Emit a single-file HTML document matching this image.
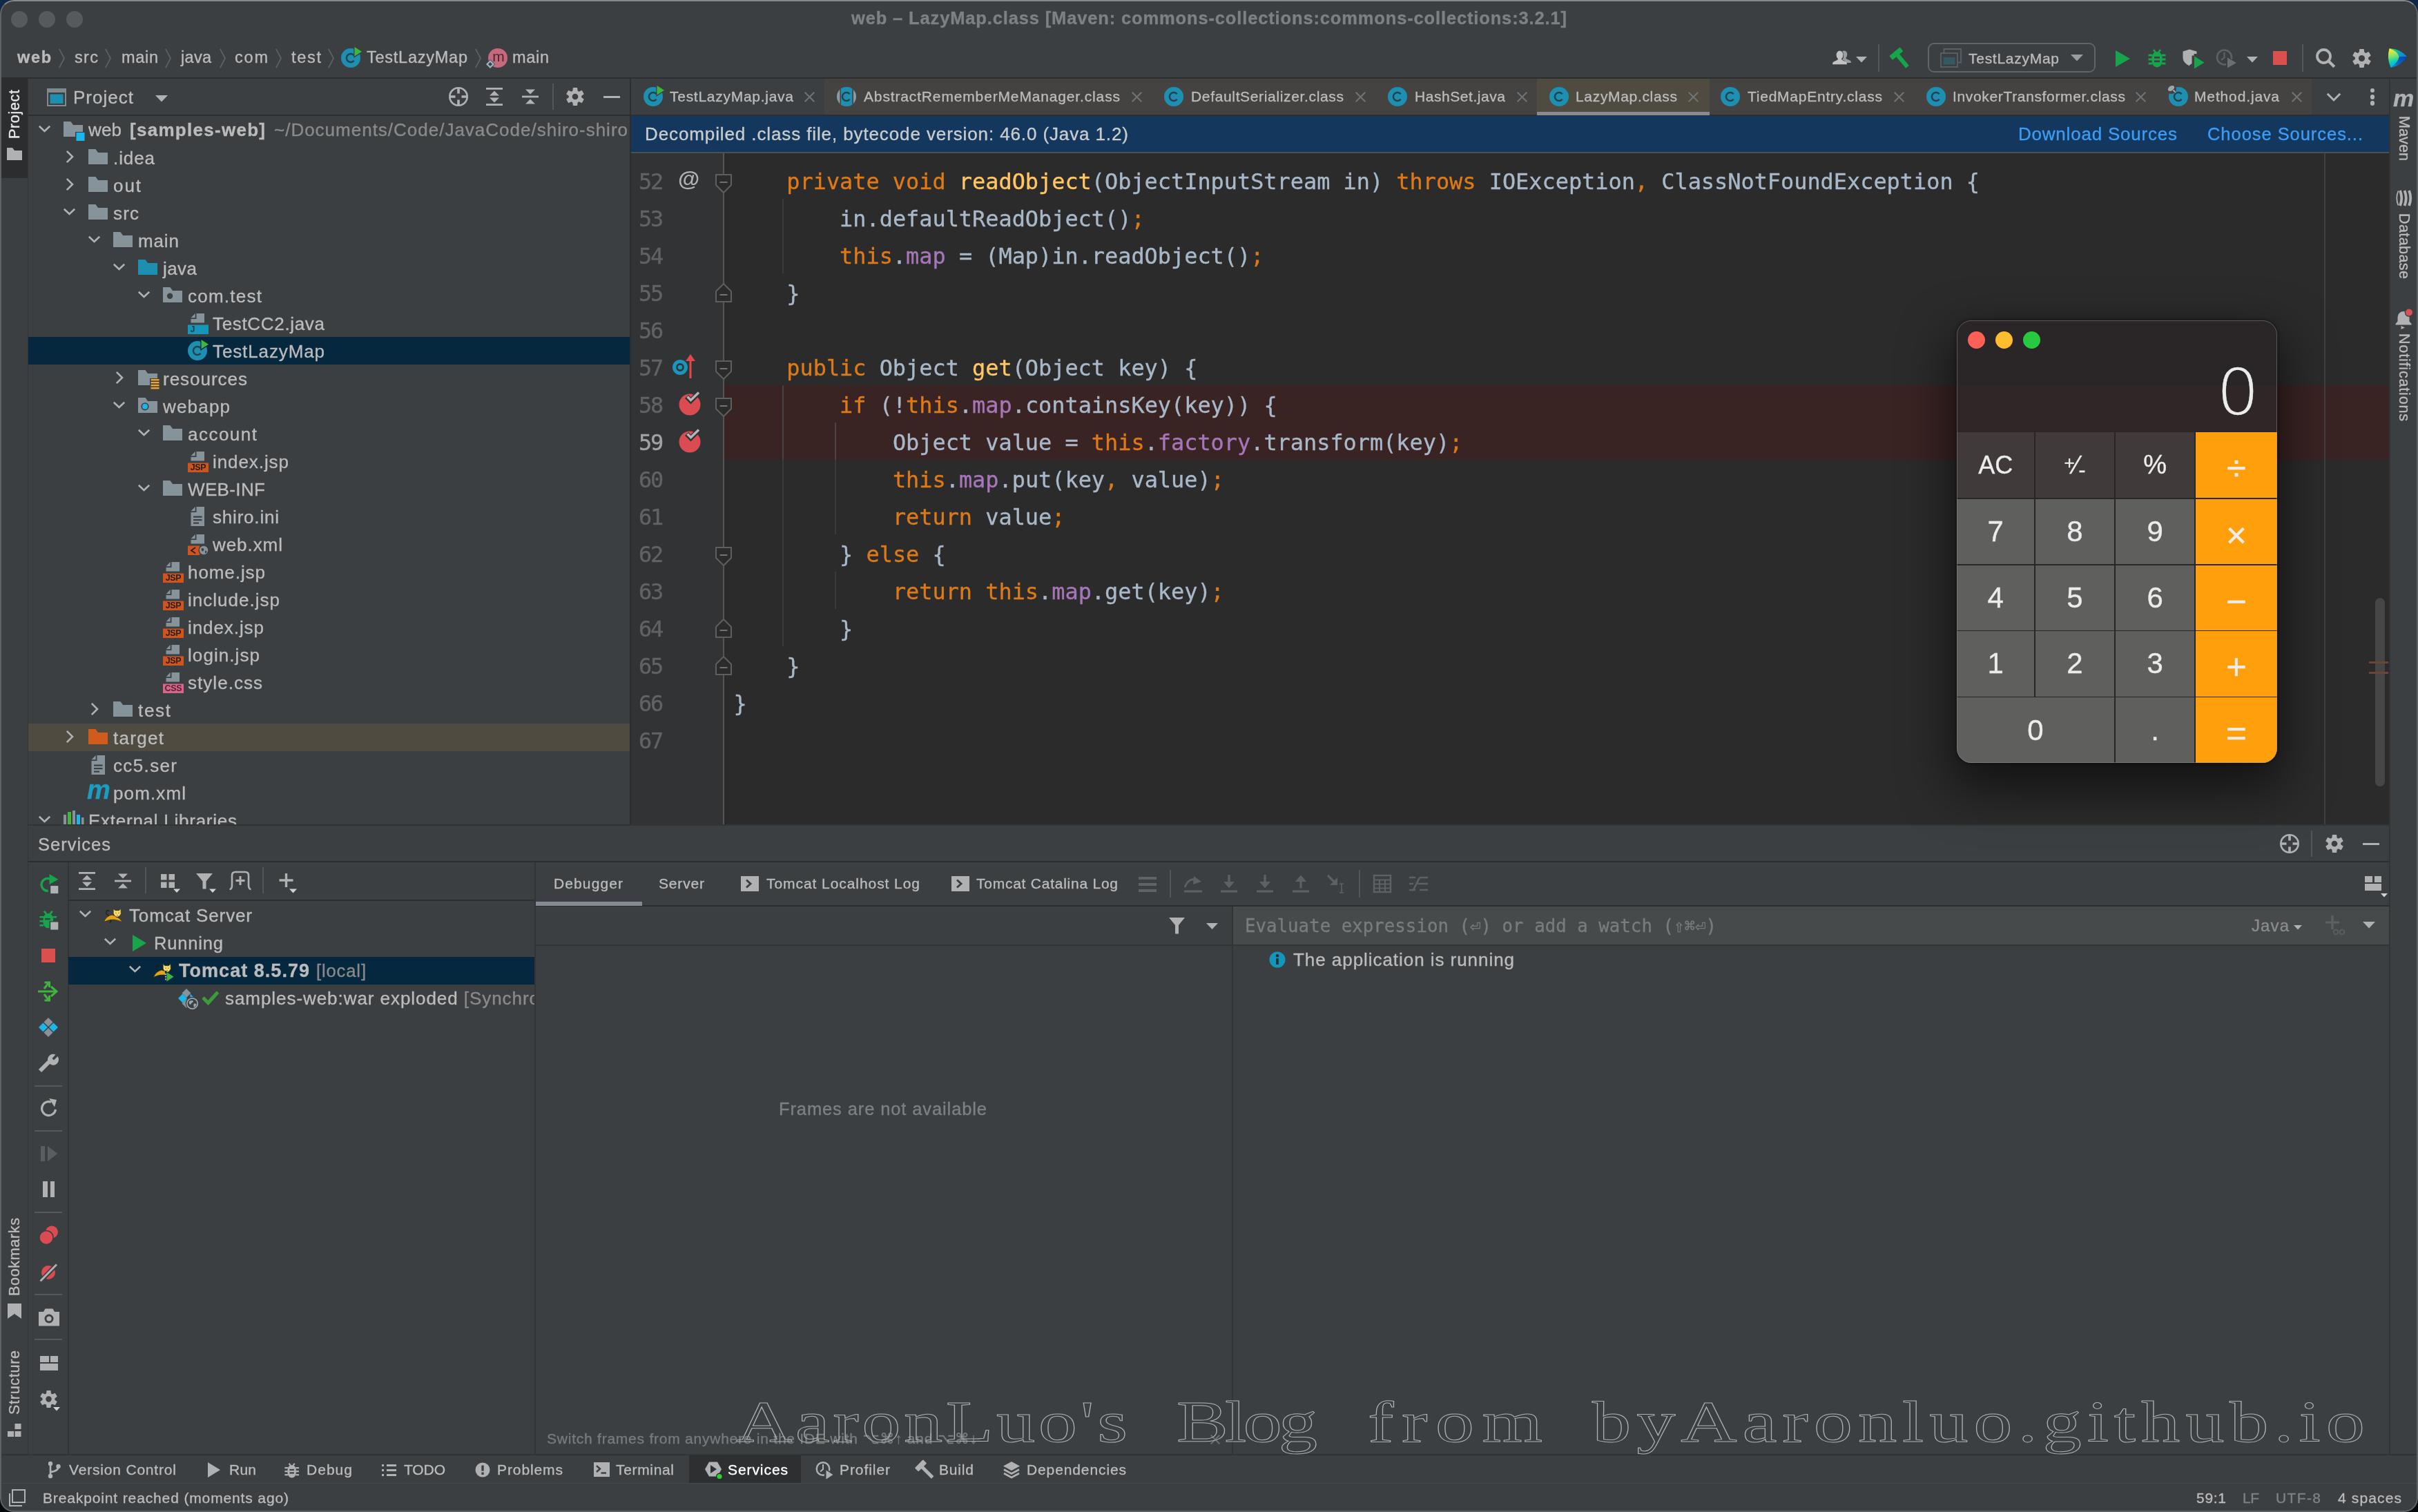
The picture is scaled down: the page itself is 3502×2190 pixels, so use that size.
<!DOCTYPE html>
<html lang="en"><head><meta charset="utf-8"><title>web – LazyMap.class</title><style>
html,body{margin:0;padding:0;background:#3c3f41;}
body{width:3502px;height:2190px;position:relative;overflow:hidden;font-family:"Liberation Sans",sans-serif;}
div,span,svg{position:absolute;}
span{white-space:pre;font-kerning:normal;-webkit-text-stroke:0.35px currentColor;}
svg{overflow:visible;}
</style></head><body>
<div id="root" style="left:0;top:0;width:3502px;height:2190px;will-change:transform">
<div style="left:16px;top:16px;width:24px;height:24px;background:#575a5c;border-radius:50%"></div>
<div style="left:56px;top:16px;width:24px;height:24px;background:#575a5c;border-radius:50%"></div>
<div style="left:96px;top:16px;width:24px;height:24px;background:#575a5c;border-radius:50%"></div>
<span id="title" style="left:1233px;top:9.0px;font-size:25.5px;line-height:34px;color:#7d8184;font-weight:700;letter-spacing:0.856px;">web – LazyMap.class [Maven: commons-collections:commons-collections:3.2.1]</span>
<span id="bc_web" style="left:25px;top:68.0px;font-size:23.5px;line-height:30px;color:#bbbbbb;font-weight:700;letter-spacing:1.641px;">web</span>
<span id="bc_src" style="left:108px;top:68.0px;font-size:23.5px;line-height:30px;color:#bbbbbb;letter-spacing:1.332px;">src</span>
<span id="bc_main" style="left:176px;top:68.0px;font-size:23.5px;line-height:30px;color:#bbbbbb;letter-spacing:0.688px;">main</span>
<span id="bc_java" style="left:262px;top:68.0px;font-size:23.5px;line-height:30px;color:#bbbbbb;letter-spacing:0.296px;">java</span>
<span id="bc_com" style="left:340px;top:68.0px;font-size:23.5px;line-height:30px;color:#bbbbbb;letter-spacing:1.797px;">com</span>
<span id="bc_test" style="left:422px;top:68.0px;font-size:23.5px;line-height:30px;color:#bbbbbb;letter-spacing:1.703px;">test</span>
<svg style="left:84.5px;top:70.0px;" width="9" height="29" viewBox="0 0 9 29"><path d="M0.8 0.8 L8 14.5 L0.8 28.2" fill="none" stroke="#5c6164" stroke-width="1.8"/></svg>
<svg style="left:151.5px;top:70.0px;" width="9" height="29" viewBox="0 0 9 29"><path d="M0.8 0.8 L8 14.5 L0.8 28.2" fill="none" stroke="#5c6164" stroke-width="1.8"/></svg>
<svg style="left:238.5px;top:70.0px;" width="9" height="29" viewBox="0 0 9 29"><path d="M0.8 0.8 L8 14.5 L0.8 28.2" fill="none" stroke="#5c6164" stroke-width="1.8"/></svg>
<svg style="left:317.5px;top:70.0px;" width="9" height="29" viewBox="0 0 9 29"><path d="M0.8 0.8 L8 14.5 L0.8 28.2" fill="none" stroke="#5c6164" stroke-width="1.8"/></svg>
<svg style="left:398.5px;top:70.0px;" width="9" height="29" viewBox="0 0 9 29"><path d="M0.8 0.8 L8 14.5 L0.8 28.2" fill="none" stroke="#5c6164" stroke-width="1.8"/></svg>
<svg style="left:474.5px;top:70.0px;" width="9" height="29" viewBox="0 0 9 29"><path d="M0.8 0.8 L8 14.5 L0.8 28.2" fill="none" stroke="#5c6164" stroke-width="1.8"/></svg>
<svg style="left:687.5px;top:70.0px;" width="9" height="29" viewBox="0 0 9 29"><path d="M0.8 0.8 L8 14.5 L0.8 28.2" fill="none" stroke="#5c6164" stroke-width="1.8"/></svg>
<svg style="left:492px;top:68px;" width="32" height="32" viewBox="0 0 32 32"><circle cx="16" cy="16" r="14" fill="#1d8fb1"/><path d="M20.6 12.3 A6 6 0 1 0 20.6 19.7" fill="none" stroke="#24414d" stroke-width="2.5"/><path d="M20.300 -2.300 L34.200 6.800 L20.300 15.900 Z" fill="#3c3f41"/><path d="M21.500 0 L32 6.800 L21.500 13.600 Z" fill="#3fb53f"/></svg>
<span id="bc_tlm" style="left:531px;top:68.0px;font-size:23.5px;line-height:30px;color:#bbbbbb;letter-spacing:0.754px;">TestLazyMap</span>
<svg style="left:704px;top:68px;" width="34" height="34" viewBox="0 0 34 34"><circle cx="17" cy="16" r="14" fill="#c5697c"/><path d="M6 18 L13 25 L6 32 L-1 25 Z" fill="#3c3f41"/><path d="M6 20.500 L10.500 25 L6 29.500 L1.500 25 Z" fill="none" stroke="#9db3c5" stroke-width="2.200"/></svg>
<span style="left:710px;top:70px;width:24px;text-align:center;font-size:21px;line-height:24px;color:#4b2530;font-weight:400;-webkit-text-stroke:0">m</span>
<span id="bc_main2" style="left:742px;top:68.0px;font-size:23.5px;line-height:30px;color:#bbbbbb;letter-spacing:0.688px;">main</span>
<svg style="left:2654px;top:71px;" width="28.5" height="24" viewBox="0 0 36 30"><path d="M21 3 a5.5 6.5 0 0 1 6 6.5 q0 4 -2.5 6 q0 2 2 3 l6 2.5 q1.5 1 1.5 4 H24 q0 -3 -2 -4 l-4 -2 q2.5 -2.5 2.5 -7 q0 -5 -2.5 -8 q1.2 -1 3 -1z" fill="#9a9da0"/><path d="M13 3 a6.5 7.5 0 0 1 6.5 7.5 q0 4.5 -3 7 q0 2 2 3 l6 2.8 q2 1 2 4.7 H0 q0 -3.700 2 -4.700 l6 -2.800 q2 -1 2 -3 q-3 -2.500 -3 -7 a6.500 7.500 0 0 1 6 -7.500z" fill="#c0c2c4"/></svg>
<svg style="left:2688.0px;top:81.75px;" width="16" height="8.5" viewBox="0 0 16 8.5"><path d="M0 0 H16 L8.0 8.5 Z" fill="#afb1b3"/></svg>
<div style="left:2720px;top:64px;width:2px;height:40px;background:#515658;"></div>
<svg style="left:2737px;top:68px;" width="36" height="32" viewBox="0 0 36 32"><g transform="rotate(-40 16 16)"><rect x="5" y="3" width="20" height="7.500" rx="1" fill="#17a54c"/><rect x="12" y="9" width="6" height="23" fill="#17a54c"/></g></svg>
<div style="left:2792px;top:62px;width:243px;height:43px;background:transparent;border:2px solid #5f6467;border-radius:9px;box-sizing:border-box"></div>
<svg style="left:2810px;top:70px;" width="32" height="28" viewBox="0 0 32 28"><path d="M5.500 6 V1 H30 V20.500 H25.500" fill="none" stroke="#5a6064" stroke-width="1.800"/><rect x="1" y="7" width="24" height="20" fill="#3c3f41" stroke="#5a6064" stroke-width="1.8"/><rect x="4.500" y="13" width="17" height="10.500" fill="#355865"/></svg>
<span id="rc_tlm" style="left:2851px;top:70.5px;font-size:21.0px;line-height:28px;color:#bbbbbb;letter-spacing:0.726px;">TestLazyMap</span>
<svg style="left:2999.0px;top:79.25px;" width="18" height="9.5" viewBox="0 0 18 9.5"><path d="M0 0 H18 L9.0 9.5 Z" fill="#9a9da0"/></svg>
<svg style="left:3064px;top:72.5px;" width="21" height="24" viewBox="0 0 21 24"><path d="M0 0 L21 12.0 L0 24 Z" fill="#17a54c"/></svg>
<svg style="left:3111.0px;top:70.0px;" width="26.0" height="28.0" viewBox="0 0 26.0 28.0"><g transform="scale(1.0)"><path d="M8 2 L11 6 M18 2 L15 6" stroke="#17a54c" stroke-width="2.6" fill="none"/><path d="M5.5 13 A7.5 8 0 0 1 20.5 13 V19 A7.5 8.5 0 0 1 5.5 19 Z" fill="#17a54c"/><path d="M0.5 10 H6 M0.5 16 H6 M0.5 22 H6 M20 10 H25.5 M20 16 H25.5 M20 22 H25.5" stroke="#17a54c" stroke-width="2.8"/><rect x="9" y="12" width="8" height="2.6" fill="#3c3f41"/><rect x="9" y="17.5" width="8" height="2.6" fill="#3c3f41"/></g></svg>
<svg style="left:3160px;top:71px;" width="34" height="30" viewBox="0 0 34 30"><path d="M11 0.500 L21.500 3.500 V7 H11 Z" fill="#afb1b3"/><path d="M11 0.500 L1.500 3.500 V13 q0 7 9.500 11.500 Z" fill="#afb1b3"/><path d="M11 6.500 h6.500 v3 h-3 v11.500 l-3.500 2.500z" fill="#afb1b3"/><path d="M18 10.500 L32.500 19.500 L18 28.500 Z" fill="#17a54c"/></svg>
<svg style="left:3208px;top:70px;" width="34" height="30" viewBox="0 0 34 30"><circle cx="13.500" cy="13" r="10.500" fill="none" stroke="#5e6164" stroke-width="2.600"/><path d="M13.500 6 V13.500 L9 17" fill="none" stroke="#5e6164" stroke-width="2.200"/><path d="M16 11 L31 20 L16 29 Z" fill="#3c3f41"/><path d="M18 13.500 L31 21 L18 28.500 Z" fill="#6b6e70"/></svg>
<svg style="left:3254.0px;top:81.75px;" width="16" height="8.5" viewBox="0 0 16 8.5"><path d="M0 0 H16 L8.0 8.5 Z" fill="#afb1b3"/></svg>
<div style="left:3292px;top:74px;width:20px;height:20px;background:#db4f4f;"></div>
<div style="left:3334px;top:64px;width:2px;height:40px;background:#515658;"></div>
<svg style="left:3353px;top:69px;" width="32" height="32" viewBox="0 0 32 32"><circle cx="12.500" cy="12.500" r="9.500" fill="none" stroke="#afb1b3" stroke-width="3.800"/><path d="M19 19 L27.800 27.800" stroke="#afb1b3" stroke-width="4.200"/></svg>
<svg style="left:3406.5px;top:70.5px;" width="27.0" height="27.0" viewBox="0 0 27.0 27.0"><g transform="translate(13.5,13.5)"><path d="M-3.17 -13.50 H3.17 L3.91 -7.43 H-3.91 Z" transform="rotate(0)" fill="#afb1b3"/><path d="M-3.17 -13.50 H3.17 L3.91 -7.43 H-3.91 Z" transform="rotate(60)" fill="#afb1b3"/><path d="M-3.17 -13.50 H3.17 L3.91 -7.43 H-3.91 Z" transform="rotate(120)" fill="#afb1b3"/><path d="M-3.17 -13.50 H3.17 L3.91 -7.43 H-3.91 Z" transform="rotate(180)" fill="#afb1b3"/><path d="M-3.17 -13.50 H3.17 L3.91 -7.43 H-3.91 Z" transform="rotate(240)" fill="#afb1b3"/><path d="M-3.17 -13.50 H3.17 L3.91 -7.43 H-3.91 Z" transform="rotate(300)" fill="#afb1b3"/><circle r="9.65" fill="#afb1b3"/><circle r="4.52" fill="#3c3f41"/></g></svg>
<svg style="left:3456px;top:68px;" width="32" height="32" viewBox="0 0 32 32"><defs><linearGradient id="lgA" x1="0" y1="0" x2="0.150" y2="1"><stop offset="0.050" stop-color="#fff21f"/><stop offset="0.450" stop-color="#86e070"/><stop offset="0.750" stop-color="#05d2b6"/><stop offset="1" stop-color="#0aaef0"/></linearGradient><linearGradient id="lgB" x1="0" y1="0" x2="1" y2="0.600"><stop offset="0" stop-color="#04e070"/><stop offset="0.550" stop-color="#07b3b3"/><stop offset="1" stop-color="#0a86e6"/></linearGradient><linearGradient id="lgC" x1="0.800" y1="0" x2="0.100" y2="1"><stop offset="0" stop-color="#0646ad"/><stop offset="0.600" stop-color="#0868c6"/><stop offset="1" stop-color="#0a9ae4"/></linearGradient></defs><path d="M4.600 2.100 Q20 2.500 30 14.200 L18.600 14.200 Q17 6 4.600 2.100 Z" fill="url(#lgB)"/><path d="M18.600 14.200 L30 14.200 Q22 27 6.600 29.900 Q17.500 22 18.600 14.200 Z" fill="url(#lgC)"/><path d="M4.600 2.100 Q17 6 18.600 14.200 Q17.500 22 6.600 29.900 Q0.300 16 4.600 2.100Z" fill="url(#lgA)"/></svg>
<div style="left:0px;top:112px;width:3502px;height:2px;background:#2b2d2e;"></div>
<div style="left:0px;top:114px;width:40px;height:1992px;background:#3c3f41;"></div>
<div style="left:40px;top:114px;width:1px;height:1992px;background:#323536;"></div>
<div style="left:0px;top:114px;width:40px;height:144px;background:#2b2d2f;"></div>
<span id="v_project" style="transform-origin:0 0;transform:rotate(-90deg);left:6.0px;top:201px;font-size:21.5px;line-height:30px;color:#e8e8e8;letter-spacing:0.679px;">Project</span>
<svg style="left:10px;top:214px;" width="22" height="18" viewBox="0 0 22 18"><path d="M0 0 H8 L11 4 H22 V18 H0 Z" fill="#afb1b3"/></svg>
<span id="v_bm" style="transform-origin:0 0;transform:rotate(-90deg);left:6.0px;top:1877px;font-size:21.5px;line-height:30px;color:#bbbbbb;letter-spacing:0.683px;">Bookmarks</span>
<svg style="left:11px;top:1888px;" width="20" height="22" viewBox="0 0 20 22"><path d="M0 0 H20 V22 L10 15 L0 22 Z" fill="#afb1b3"/></svg>
<span id="v_st" style="transform-origin:0 0;transform:rotate(-90deg);left:6.0px;top:2049px;font-size:21.5px;line-height:30px;color:#bbbbbb;letter-spacing:0.721px;">Structure</span>
<svg style="left:11px;top:2062px;" width="20" height="20" viewBox="0 0 20 20"><rect x="10.500" y="0" width="9" height="8" fill="#afb1b3"/><rect x="0" y="11" width="9" height="8" fill="#afb1b3"/><rect x="10.500" y="11" width="9" height="8" fill="#afb1b3"/></svg>
<div style="left:3460px;top:114px;width:2px;height:1992px;background:#323536;"></div>
<span style="left:3466px;top:124px;font-size:34px;line-height:36px;font-weight:700;font-style:italic;color:#afb1b3;letter-spacing:-1px">m</span>
<span id="v_maven" style="transform-origin:0 0;transform:rotate(90deg);left:3497.0px;top:168px;font-size:21.5px;line-height:30px;color:#bbbbbb;letter-spacing:0.115px;">Maven</span>
<svg style="left:3469px;top:275px;" width="26" height="24" viewBox="0 0 26 24"><g fill="none" stroke="#afb1b3" stroke-width="3.800"><path d="M4.500 1.500 q-4.500 10.500 0 21" stroke-width="1.800"/><path d="M7 1 q4.500 11 0 22"/><path d="M13.500 1 q4.500 11 0 22"/><path d="M20 1 q4.500 11 0 22"/></g></svg>
<span id="v_db" style="transform-origin:0 0;transform:rotate(90deg);left:3497.0px;top:309px;font-size:21.5px;line-height:30px;color:#bbbbbb;letter-spacing:0.422px;">Database</span>
<svg style="left:3468px;top:446px;" width="28" height="30" viewBox="0 0 28 30"><path d="M13 5 a8.500 8.500 0 0 1 8.500 8.500 v6 l3 3.500 v1.500 H1.500 v-1.500 l3 -3.500 v-6 a8.500 8.500 0 0 1 8.500 -8.500z" fill="#afb1b3"/><path d="M9.500 26 L15 28.500 L9.500 31 Z" fill="#afb1b3"/><circle cx="21" cy="6.500" r="6.300" fill="#3c3f41"/><circle cx="21" cy="6.500" r="5" fill="#db4f55"/></svg>
<span id="v_nt" style="transform-origin:0 0;transform:rotate(90deg);left:3497.0px;top:483px;font-size:21.5px;line-height:30px;color:#bbbbbb;letter-spacing:0.824px;">Notifications</span>
<svg style="left:68px;top:128px;" width="28" height="26" viewBox="0 0 28 26"><rect x="1" y="1" width="26" height="24" fill="#3c3f41" stroke="#7f8b91" stroke-width="2"/><rect x="1" y="1" width="26" height="5" fill="#7f8b91"/><rect x="4.500" y="8.500" width="19" height="13.500" fill="#1d8fb1"/></svg>
<span id="ph_project" style="left:106px;top:124.0px;font-size:26.0px;line-height:34px;color:#bbbbbb;letter-spacing:1.013px;">Project</span>
<svg style="left:225.0px;top:138.25px;" width="18" height="9.5" viewBox="0 0 18 9.5"><path d="M0 0 H18 L9.0 9.5 Z" fill="#afb1b3"/></svg>
<svg style="left:649px;top:125px;" width="30" height="30" viewBox="0 0 30 30"><g transform="translate(15,15)"><circle r="12.7" fill="none" stroke="#afb1b3" stroke-width="2.6"/><path d="M0 -13 V-4.5 M0 4.5 V13 M-13 0 H-4.5 M4.5 0 H13" stroke="#afb1b3" stroke-width="3.6"/></g></svg>
<svg style="left:704px;top:127px;" width="24" height="26" viewBox="0 0 24 26"><rect x="0" y="0" width="24" height="2.8" fill="#afb1b3"/><rect x="0" y="23.2" width="24" height="2.8" fill="#afb1b3"/><path d="M12 4.5 L19 11.5 H5 Z M12 21.5 L19 14.5 H5 Z" fill="#afb1b3"/></svg>
<svg style="left:756px;top:127px;" width="24" height="26" viewBox="0 0 24 26"><rect x="0" y="11.6" width="24" height="2.8" fill="#afb1b3"/><path d="M12 9.5 L19 2.5 H5 Z M12 16.5 L19 23.5 H5 Z" fill="#afb1b3"/></svg>
<div style="left:800px;top:121px;width:2px;height:38px;background:#515658;"></div>
<svg style="left:820px;top:127px;" width="26" height="26" viewBox="0 0 26 26"><g transform="translate(13,13)"><path d="M-3.05 -13.00 H3.05 L3.77 -7.15 H-3.77 Z" transform="rotate(0)" fill="#afb1b3"/><path d="M-3.05 -13.00 H3.05 L3.77 -7.15 H-3.77 Z" transform="rotate(60)" fill="#afb1b3"/><path d="M-3.05 -13.00 H3.05 L3.77 -7.15 H-3.77 Z" transform="rotate(120)" fill="#afb1b3"/><path d="M-3.05 -13.00 H3.05 L3.77 -7.15 H-3.77 Z" transform="rotate(180)" fill="#afb1b3"/><path d="M-3.05 -13.00 H3.05 L3.77 -7.15 H-3.77 Z" transform="rotate(240)" fill="#afb1b3"/><path d="M-3.05 -13.00 H3.05 L3.77 -7.15 H-3.77 Z" transform="rotate(300)" fill="#afb1b3"/><circle r="9.29" fill="#afb1b3"/><circle r="4.36" fill="#3c3f41"/></g></svg>
<div style="left:874.0px;top:138.5px;width:24px;height:3px;background:#afb1b3;"></div>
<div style="left:41px;top:166px;width:871px;height:2px;background:#2b2d2e;"></div>
<div style="left:41px;top:488px;width:871px;height:40px;background:#06283f;"></div>
<div style="left:41px;top:1048px;width:871px;height:40px;background:#4f4b41;"></div>
<svg style="left:56.0px;top:181.5px;" width="17" height="9" viewBox="0 0 17 9"><path d="M0.8 0.8 L8.5 8 L16.2 0.8" fill="none" stroke="#afb1b3" stroke-width="2.6"/></svg>
<svg style="left:92px;top:176px;" width="32" height="30" viewBox="0 0 32 30"><path d="M0 0 H10.5 L14 5 H28 V15 H17 V22 H0 Z" fill="#87939a"/><rect x="18.5" y="16" width="12" height="12" fill="#1ab6ec"/></svg>
<span id="tr0a" style="left:128px;top:171.0px;font-size:26px;line-height:34px;color:#bbbbbb;letter-spacing:0.152px;">web</span>
<span id="tr0b" style="left:188px;top:171.0px;font-size:26px;line-height:34px;color:#bbbbbb;font-weight:700;letter-spacing:1.282px;">[samples-web]</span>
<span id="tr0c" style="left:397px;top:171.0px;font-size:26px;line-height:34px;color:#8a8a8a;letter-spacing:0.995px;">~/Documents/Code/JavaCode/shiro-shiro</span>
<svg style="left:96.0px;top:217.5px;" width="10" height="18" viewBox="0 0 10 18"><path d="M0.8 0.8 L9 9.0 L0.8 17.2" fill="none" stroke="#afb1b3" stroke-width="2.6"/></svg>
<svg style="left:128px;top:216px;" width="32" height="30" viewBox="0 0 32 30"><path d="M0 0 H10.5 L14 5 H28 V22 H0 Z" fill="#87939a"/></svg>
<span id="tr1" style="left:164px;top:211.5px;font-size:26px;line-height:34px;color:#bbbbbb;letter-spacing:0.903px;">.idea</span>
<svg style="left:96.0px;top:257.5px;" width="10" height="18" viewBox="0 0 10 18"><path d="M0.8 0.8 L9 9.0 L0.8 17.2" fill="none" stroke="#afb1b3" stroke-width="2.6"/></svg>
<svg style="left:128px;top:256px;" width="32" height="30" viewBox="0 0 32 30"><path d="M0 0 H10.5 L14 5 H28 V22 H0 Z" fill="#87939a"/></svg>
<span id="tr2" style="left:164px;top:251.5px;font-size:26px;line-height:34px;color:#bbbbbb;letter-spacing:1.924px;">out</span>
<svg style="left:92.0px;top:301.5px;" width="17" height="9" viewBox="0 0 17 9"><path d="M0.8 0.8 L8.5 8 L16.2 0.8" fill="none" stroke="#afb1b3" stroke-width="2.6"/></svg>
<svg style="left:128px;top:296px;" width="32" height="30" viewBox="0 0 32 30"><path d="M0 0 H10.5 L14 5 H28 V22 H0 Z" fill="#87939a"/></svg>
<span id="tr3" style="left:164px;top:291.5px;font-size:26px;line-height:34px;color:#bbbbbb;letter-spacing:1.168px;">src</span>
<svg style="left:128.0px;top:341.5px;" width="17" height="9" viewBox="0 0 17 9"><path d="M0.8 0.8 L8.5 8 L16.2 0.8" fill="none" stroke="#afb1b3" stroke-width="2.6"/></svg>
<svg style="left:164px;top:336px;" width="32" height="30" viewBox="0 0 32 30"><path d="M0 0 H10.5 L14 5 H28 V22 H0 Z" fill="#87939a"/></svg>
<span id="tr4" style="left:200px;top:331.5px;font-size:26px;line-height:34px;color:#bbbbbb;letter-spacing:0.878px;">main</span>
<svg style="left:164.0px;top:381.5px;" width="17" height="9" viewBox="0 0 17 9"><path d="M0.8 0.8 L8.5 8 L16.2 0.8" fill="none" stroke="#afb1b3" stroke-width="2.6"/></svg>
<svg style="left:200px;top:376px;" width="32" height="30" viewBox="0 0 32 30"><path d="M0 0 H10.5 L14 5 H28 V22 H0 Z" fill="#1d8fb1"/></svg>
<span id="tr5" style="left:236px;top:371.5px;font-size:26px;line-height:34px;color:#bbbbbb;letter-spacing:0.431px;">java</span>
<svg style="left:200.0px;top:421.5px;" width="17" height="9" viewBox="0 0 17 9"><path d="M0.8 0.8 L8.5 8 L16.2 0.8" fill="none" stroke="#afb1b3" stroke-width="2.6"/></svg>
<svg style="left:236px;top:416px;" width="32" height="30" viewBox="0 0 32 30"><path d="M0 0 H10.5 L14 5 H28 V22 H0 Z" fill="#87939a"/><circle cx="10.100" cy="12.800" r="4.200" fill="#3c3f41"/></svg>
<span id="tr6" style="left:272px;top:411.5px;font-size:26px;line-height:34px;color:#bbbbbb;letter-spacing:1.250px;">com.test</span>
<svg style="left:272px;top:454px;" width="30" height="30" viewBox="0 0 30 30"><path d="M12.5 0 H24 V13.5 H4.5 V8 H12.5 Z" fill="#87939a"/><path d="M4.5 6.2 L10.7 0 V6.2 Z" fill="#87939a"/><rect x="0" y="16.5" width="30" height="13.5" fill="#1497b8"/></svg>
<span style="left:275.5px;top:470px;font-size:12.5px;line-height:14px;font-weight:700;color:#1f3a45;-webkit-text-stroke:0">J</span>
<span id="tr7" style="left:308px;top:451.5px;font-size:26px;line-height:34px;color:#bbbbbb;letter-spacing:0.671px;">TestCC2.java</span>
<svg style="left:270px;top:492px;" width="32" height="32" viewBox="0 0 32 32"><circle cx="16" cy="16" r="14" fill="#1d8fb1"/><path d="M20.6 12.3 A6 6 0 1 0 20.6 19.7" fill="none" stroke="#24414d" stroke-width="2.5"/><path d="M20.300 -2.300 L34.200 6.800 L20.300 15.900 Z" fill="#06283f"/><path d="M21.500 0 L32 6.800 L21.500 13.600 Z" fill="#3fb53f"/></svg>
<span id="tr8" style="left:308px;top:491.5px;font-size:26px;line-height:34px;color:#bbbbbb;letter-spacing:0.882px;">TestLazyMap</span>
<svg style="left:168.0px;top:537.5px;" width="10" height="18" viewBox="0 0 10 18"><path d="M0.8 0.8 L9 9.0 L0.8 17.2" fill="none" stroke="#afb1b3" stroke-width="2.6"/></svg>
<svg style="left:200px;top:536px;" width="32" height="30" viewBox="0 0 32 30"><path d="M0 0 H10.5 L14 5 H28 V12 H17 V22 H0 Z" fill="#87939a"/><rect x="18.5" y="13" width="12" height="2.4" fill="#f0a51f"/><rect x="18.5" y="17" width="12" height="2.4" fill="#f0a51f"/><rect x="18.5" y="21" width="12" height="2.4" fill="#f0a51f"/><rect x="18.5" y="25" width="12" height="2.4" fill="#f0a51f"/></svg>
<span id="tr9" style="left:236px;top:531.5px;font-size:26px;line-height:34px;color:#bbbbbb;letter-spacing:0.980px;">resources</span>
<svg style="left:164.0px;top:581.5px;" width="17" height="9" viewBox="0 0 17 9"><path d="M0.8 0.8 L8.5 8 L16.2 0.8" fill="none" stroke="#afb1b3" stroke-width="2.6"/></svg>
<svg style="left:200px;top:576px;" width="32" height="30" viewBox="0 0 32 30"><path d="M0 0 H10.5 L14 5 H28 V22 H0 Z" fill="#87939a"/><circle cx="10" cy="12.800" r="5.600" fill="#3c3f41"/><circle cx="10" cy="12.800" r="4" fill="#1ab6ec"/></svg>
<span id="tr10" style="left:236px;top:571.5px;font-size:26px;line-height:34px;color:#bbbbbb;letter-spacing:1.183px;">webapp</span>
<svg style="left:200.0px;top:621.5px;" width="17" height="9" viewBox="0 0 17 9"><path d="M0.8 0.8 L8.5 8 L16.2 0.8" fill="none" stroke="#afb1b3" stroke-width="2.6"/></svg>
<svg style="left:236px;top:616px;" width="32" height="30" viewBox="0 0 32 30"><path d="M0 0 H10.5 L14 5 H28 V22 H0 Z" fill="#87939a"/></svg>
<span id="tr11" style="left:272px;top:611.5px;font-size:26px;line-height:34px;color:#bbbbbb;letter-spacing:1.487px;">account</span>
<svg style="left:272px;top:654px;" width="30" height="30" viewBox="0 0 30 30"><path d="M12.5 0 H24 V13.5 H4.5 V8 H12.5 Z" fill="#87939a"/><path d="M4.5 6.2 L10.7 0 V6.2 Z" fill="#87939a"/><rect x="0" y="16.5" width="30" height="13.5" fill="#d0541b"/></svg>
<span style="left:272px;top:670px;width:30px;text-align:center;font-size:12.5px;line-height:14px;font-weight:700;color:#231f20;letter-spacing:-0.3px;-webkit-text-stroke:0">JSP</span>
<span id="tr12" style="left:308px;top:651.5px;font-size:26px;line-height:34px;color:#bbbbbb;letter-spacing:0.923px;">index.jsp</span>
<svg style="left:200.0px;top:701.5px;" width="17" height="9" viewBox="0 0 17 9"><path d="M0.8 0.8 L8.5 8 L16.2 0.8" fill="none" stroke="#afb1b3" stroke-width="2.6"/></svg>
<svg style="left:236px;top:696px;" width="32" height="30" viewBox="0 0 32 30"><path d="M0 0 H10.5 L14 5 H28 V22 H0 Z" fill="#87939a"/></svg>
<span id="tr13" style="left:272px;top:691.5px;font-size:26px;line-height:34px;color:#bbbbbb;letter-spacing:0.371px;">WEB-INF</span>
<svg style="left:272px;top:734px;" width="30" height="30" viewBox="0 0 30 30"><path d="M12.5 0 H24 V28 H4.5 V8 H12.5 Z" fill="#87939a"/><path d="M4.5 6.2 L10.7 0 V6.2 Z" fill="#87939a"/><rect x="8" y="13.5" width="12.5" height="2.2" fill="#3c3f41"/><rect x="8" y="18" width="12.5" height="2.2" fill="#3c3f41"/><rect x="8" y="22.5" width="8" height="2.2" fill="#3c3f41"/></svg>
<span id="tr14" style="left:308px;top:731.5px;font-size:26px;line-height:34px;color:#bbbbbb;letter-spacing:0.800px;">shiro.ini</span>
<svg style="left:272px;top:774px;" width="32" height="32" viewBox="0 0 32 32"><path d="M12.5 0 H24 V13.5 H4.5 V8 H12.5 Z" fill="#87939a"/><path d="M4.5 6.2 L10.7 0 V6.2 Z" fill="#87939a"/><rect x="0" y="16.5" width="17" height="13.5" fill="#d0541b"/><path d="M11 19 L5 23.2 L11 27.4" fill="none" stroke="#231f20" stroke-width="1.8"/><circle cx="23" cy="23" r="7.6" fill="#3c3f41"/><circle cx="23" cy="23" r="6.2" fill="#87939a"/><path d="M19.5 20.5 q3 -1.5 4 1 q-0.5 2.5 -2.5 3 q-1.5 -1.5 -1.5 -4z M25 24 q2 -1 2.5 1.5 q-1.2 2 -2.5 2z" fill="#3c3f41"/></svg>
<span id="tr15" style="left:308px;top:771.5px;font-size:26px;line-height:34px;color:#bbbbbb;letter-spacing:0.940px;">web.xml</span>
<svg style="left:236px;top:814px;" width="30" height="30" viewBox="0 0 30 30"><path d="M12.5 0 H24 V13.5 H4.5 V8 H12.5 Z" fill="#87939a"/><path d="M4.5 6.2 L10.7 0 V6.2 Z" fill="#87939a"/><rect x="0" y="16.5" width="30" height="13.5" fill="#d0541b"/></svg>
<span style="left:236px;top:830px;width:30px;text-align:center;font-size:12.5px;line-height:14px;font-weight:700;color:#231f20;letter-spacing:-0.3px;-webkit-text-stroke:0">JSP</span>
<span id="tr16" style="left:272px;top:811.5px;font-size:26px;line-height:34px;color:#bbbbbb;letter-spacing:0.927px;">home.jsp</span>
<svg style="left:236px;top:854px;" width="30" height="30" viewBox="0 0 30 30"><path d="M12.5 0 H24 V13.5 H4.5 V8 H12.5 Z" fill="#87939a"/><path d="M4.5 6.2 L10.7 0 V6.2 Z" fill="#87939a"/><rect x="0" y="16.5" width="30" height="13.5" fill="#d0541b"/></svg>
<span style="left:236px;top:870px;width:30px;text-align:center;font-size:12.5px;line-height:14px;font-weight:700;color:#231f20;letter-spacing:-0.3px;-webkit-text-stroke:0">JSP</span>
<span id="tr17" style="left:272px;top:851.5px;font-size:26px;line-height:34px;color:#bbbbbb;letter-spacing:1.014px;">include.jsp</span>
<svg style="left:236px;top:894px;" width="30" height="30" viewBox="0 0 30 30"><path d="M12.5 0 H24 V13.5 H4.5 V8 H12.5 Z" fill="#87939a"/><path d="M4.5 6.2 L10.7 0 V6.2 Z" fill="#87939a"/><rect x="0" y="16.5" width="30" height="13.5" fill="#d0541b"/></svg>
<span style="left:236px;top:910px;width:30px;text-align:center;font-size:12.5px;line-height:14px;font-weight:700;color:#231f20;letter-spacing:-0.3px;-webkit-text-stroke:0">JSP</span>
<span id="tr18" style="left:272px;top:891.5px;font-size:26px;line-height:34px;color:#bbbbbb;letter-spacing:0.923px;">index.jsp</span>
<svg style="left:236px;top:934px;" width="30" height="30" viewBox="0 0 30 30"><path d="M12.5 0 H24 V13.5 H4.5 V8 H12.5 Z" fill="#87939a"/><path d="M4.5 6.2 L10.7 0 V6.2 Z" fill="#87939a"/><rect x="0" y="16.5" width="30" height="13.5" fill="#d0541b"/></svg>
<span style="left:236px;top:950px;width:30px;text-align:center;font-size:12.5px;line-height:14px;font-weight:700;color:#231f20;letter-spacing:-0.3px;-webkit-text-stroke:0">JSP</span>
<span id="tr19" style="left:272px;top:931.5px;font-size:26px;line-height:34px;color:#bbbbbb;letter-spacing:1.075px;">login.jsp</span>
<svg style="left:236px;top:974px;" width="30" height="30" viewBox="0 0 30 30"><path d="M12.5 0 H24 V13.5 H4.5 V8 H12.5 Z" fill="#87939a"/><path d="M4.5 6.2 L10.7 0 V6.2 Z" fill="#87939a"/><rect x="0" y="16.5" width="30" height="13.5" fill="#d4678a"/></svg>
<span style="left:236px;top:990px;width:30px;text-align:center;font-size:12.5px;line-height:14px;font-weight:700;color:#5a1f33;letter-spacing:-0.3px;-webkit-text-stroke:0">CSS</span>
<span id="tr20" style="left:272px;top:971.5px;font-size:26px;line-height:34px;color:#bbbbbb;letter-spacing:1.039px;">style.css</span>
<svg style="left:132.0px;top:1017.5px;" width="10" height="18" viewBox="0 0 10 18"><path d="M0.8 0.8 L9 9.0 L0.8 17.2" fill="none" stroke="#afb1b3" stroke-width="2.6"/></svg>
<svg style="left:164px;top:1016px;" width="32" height="30" viewBox="0 0 32 30"><path d="M0 0 H10.5 L14 5 H28 V22 H0 Z" fill="#87939a"/></svg>
<span id="tr21" style="left:200px;top:1011.5px;font-size:26px;line-height:34px;color:#bbbbbb;letter-spacing:1.694px;">test</span>
<svg style="left:96.0px;top:1057.5px;" width="10" height="18" viewBox="0 0 10 18"><path d="M0.8 0.8 L9 9.0 L0.8 17.2" fill="none" stroke="#afb1b3" stroke-width="2.6"/></svg>
<svg style="left:128px;top:1056px;" width="32" height="30" viewBox="0 0 32 30"><path d="M0 0 H10.5 L14 5 H28 V22 H0 Z" fill="#cf5b1d"/></svg>
<span id="tr22" style="left:164px;top:1051.5px;font-size:26px;line-height:34px;color:#bbbbbb;letter-spacing:1.302px;">target</span>
<svg style="left:128px;top:1094px;" width="30" height="30" viewBox="0 0 30 30"><path d="M12.5 0 H24 V28 H4.5 V8 H12.5 Z" fill="#87939a"/><path d="M4.5 6.2 L10.7 0 V6.2 Z" fill="#87939a"/><rect x="8" y="13.5" width="12.5" height="2.2" fill="#3c3f41"/><rect x="8" y="18" width="12.5" height="2.2" fill="#3c3f41"/><rect x="8" y="22.5" width="8" height="2.2" fill="#3c3f41"/></svg>
<span id="tr23" style="left:164px;top:1091.5px;font-size:26px;line-height:34px;color:#bbbbbb;letter-spacing:1.364px;">cc5.ser</span>
<span style="left:126px;top:1124px;font-size:38px;line-height:40px;font-weight:700;font-style:italic;color:#1d9bc0;letter-spacing:-1px">m</span>
<span id="tr24" style="left:164px;top:1131.5px;font-size:26px;line-height:34px;color:#bbbbbb;letter-spacing:1.125px;">pom.xml</span>
<svg style="left:56.0px;top:1181.5px;" width="17" height="9" viewBox="0 0 17 9"><path d="M0.8 0.8 L8.5 8 L16.2 0.8" fill="none" stroke="#afb1b3" stroke-width="2.6"/></svg>
<svg style="left:92px;top:1174px;" width="30" height="28" viewBox="0 0 30 28"><rect x="0" y="6" width="4" height="22" fill="#87939a"/><rect x="6" y="2" width="5" height="26" fill="#45b53c"/><rect x="13" y="0" width="4" height="28" fill="#87939a"/><rect x="19" y="6" width="5" height="22" fill="#1ab6ec"/><rect x="26" y="10" width="3.500" height="18" fill="#87939a"/></svg>
<span id="tr25" style="left:128px;top:1171.5px;font-size:26px;line-height:34px;color:#bbbbbb;letter-spacing:0.746px;">External Libraries</span>
<div style="left:41px;top:1195px;width:871px;height:14px;background:#3c3f41;"></div>
<div style="left:912px;top:114px;width:2548px;height:52px;background:#3c3f41;"></div>
<div style="left:1194px;top:114px;width:2154px;height:52px;background:#454341;"></div>
<div style="left:2226px;top:114px;width:250px;height:52px;background:#4f4b41;"></div>
<div style="left:2226px;top:162px;width:250px;height:5px;background:#8a9199;"></div>
<div style="left:912px;top:166px;width:2548px;height:2px;background:#2b2d2e;"></div>
<div style="left:2226px;top:162px;width:250px;height:5px;background:#848b93;"></div>
<svg style="left:930px;top:124px;" width="32" height="32" viewBox="0 0 32 32"><circle cx="16" cy="16" r="14" fill="#1d8fb1"/><path d="M20.6 12.3 A6 6 0 1 0 20.6 19.7" fill="none" stroke="#24414d" stroke-width="2.5"/><path d="M20.300 -2.300 L34.200 6.800 L20.300 15.900 Z" fill="#3c3f41"/><path d="M21.500 0 L32 6.800 L21.500 13.600 Z" fill="#3fb53f"/></svg>
<span id="tab0" style="left:970px;top:126.0px;font-size:21px;line-height:28px;color:#bbbbbb;letter-spacing:0.728px;">TestLazyMap.java</span>
<svg style="left:1164.5px;top:132.5px;" width="15" height="15" viewBox="0 0 15 15"><path d="M0.7 0.7 L14.3 14.3 M14.3 0.7 L0.7 14.3" stroke="#6f7476" stroke-width="2" fill="none"/></svg>
<svg style="left:1210px;top:124px;" width="32" height="32" viewBox="0 0 32 32"><defs><clipPath id="abclip"><circle cx="16" cy="16" r="14"/></clipPath></defs><circle cx="16" cy="16" r="14" fill="#8a9ba6"/><rect x="6.400" y="0" width="19.600" height="32" fill="#454341" clip-path="url(#abclip)"/><rect x="8" y="0" width="16.300" height="32" fill="#1d8fb1" clip-path="url(#abclip)"/><path d="M20.600 12.300 A6 6 0 1 0 20.600 19.700" fill="none" stroke="#24414d" stroke-width="2.500"/></svg>
<span id="tab1" style="left:1251px;top:126.0px;font-size:21px;line-height:28px;color:#bbbbbb;letter-spacing:0.851px;">AbstractRememberMeManager.class</span>
<svg style="left:1638.5px;top:132.5px;" width="15" height="15" viewBox="0 0 15 15"><path d="M0.7 0.7 L14.3 14.3 M14.3 0.7 L0.7 14.3" stroke="#6f7476" stroke-width="2" fill="none"/></svg>
<svg style="left:1684px;top:124px;" width="32" height="32" viewBox="0 0 32 32"><circle cx="16" cy="16" r="14" fill="#1d8fb1"/><path d="M20.6 12.3 A6 6 0 1 0 20.6 19.7" fill="none" stroke="#24414d" stroke-width="2.5"/></svg>
<span id="tab2" style="left:1725px;top:126.0px;font-size:21px;line-height:28px;color:#bbbbbb;letter-spacing:0.655px;">DefaultSerializer.class</span>
<svg style="left:1962.5px;top:132.5px;" width="15" height="15" viewBox="0 0 15 15"><path d="M0.7 0.7 L14.3 14.3 M14.3 0.7 L0.7 14.3" stroke="#6f7476" stroke-width="2" fill="none"/></svg>
<svg style="left:2008px;top:124px;" width="32" height="32" viewBox="0 0 32 32"><circle cx="16" cy="16" r="14" fill="#1d8fb1"/><path d="M20.6 12.3 A6 6 0 1 0 20.6 19.7" fill="none" stroke="#24414d" stroke-width="2.5"/></svg>
<span id="tab3" style="left:2049px;top:126.0px;font-size:21px;line-height:28px;color:#bbbbbb;letter-spacing:0.553px;">HashSet.java</span>
<svg style="left:2196.5px;top:132.5px;" width="15" height="15" viewBox="0 0 15 15"><path d="M0.7 0.7 L14.3 14.3 M14.3 0.7 L0.7 14.3" stroke="#6f7476" stroke-width="2" fill="none"/></svg>
<svg style="left:2242px;top:124px;" width="32" height="32" viewBox="0 0 32 32"><circle cx="16" cy="16" r="14" fill="#1d8fb1"/><path d="M20.6 12.3 A6 6 0 1 0 20.6 19.7" fill="none" stroke="#24414d" stroke-width="2.5"/></svg>
<span id="tab4" style="left:2282px;top:126.0px;font-size:21px;line-height:28px;color:#bbbbbb;letter-spacing:0.675px;">LazyMap.class</span>
<svg style="left:2444.5px;top:132.5px;" width="15" height="15" viewBox="0 0 15 15"><path d="M0.7 0.7 L14.3 14.3 M14.3 0.7 L0.7 14.3" stroke="#6f7476" stroke-width="2" fill="none"/></svg>
<svg style="left:2490px;top:124px;" width="32" height="32" viewBox="0 0 32 32"><circle cx="16" cy="16" r="14" fill="#1d8fb1"/><path d="M20.6 12.3 A6 6 0 1 0 20.6 19.7" fill="none" stroke="#24414d" stroke-width="2.5"/></svg>
<span id="tab5" style="left:2531px;top:126.0px;font-size:21px;line-height:28px;color:#bbbbbb;letter-spacing:0.761px;">TiedMapEntry.class</span>
<svg style="left:2742.5px;top:132.5px;" width="15" height="15" viewBox="0 0 15 15"><path d="M0.7 0.7 L14.3 14.3 M14.3 0.7 L0.7 14.3" stroke="#6f7476" stroke-width="2" fill="none"/></svg>
<svg style="left:2788px;top:124px;" width="32" height="32" viewBox="0 0 32 32"><circle cx="16" cy="16" r="14" fill="#1d8fb1"/><path d="M20.6 12.3 A6 6 0 1 0 20.6 19.7" fill="none" stroke="#24414d" stroke-width="2.5"/></svg>
<span id="tab6" style="left:2828px;top:126.0px;font-size:21px;line-height:28px;color:#bbbbbb;letter-spacing:0.654px;">InvokerTransformer.class</span>
<svg style="left:3092.5px;top:132.5px;" width="15" height="15" viewBox="0 0 15 15"><path d="M0.7 0.7 L14.3 14.3 M14.3 0.7 L0.7 14.3" stroke="#6f7476" stroke-width="2" fill="none"/></svg>
<svg style="left:3139px;top:124px;" width="32" height="32" viewBox="0 0 32 32"><circle cx="16" cy="16" r="14" fill="#1d8fb1"/><path d="M20.6 12.3 A6 6 0 1 0 20.6 19.7" fill="none" stroke="#24414d" stroke-width="2.5"/><circle cx="6" cy="5" r="7" fill="#454341"/><ellipse cx="5.5" cy="4" rx="5.2" ry="3.4" transform="rotate(-35 5.5 4)" fill="#9aa7b0"/><path d="M8 7.5 L13 11 L9.5 6 Z" fill="#c9ced2"/></svg>
<span id="tab7" style="left:3178px;top:126.0px;font-size:21px;line-height:28px;color:#bbbbbb;letter-spacing:0.859px;">Method.java</span>
<svg style="left:3318.5px;top:132.5px;" width="15" height="15" viewBox="0 0 15 15"><path d="M0.7 0.7 L14.3 14.3 M14.3 0.7 L0.7 14.3" stroke="#6f7476" stroke-width="2" fill="none"/></svg>
<svg style="left:3370.0px;top:134.5px;" width="20" height="11" viewBox="0 0 20 11"><path d="M0.8 0.8 L10.0 10 L19.2 0.8" fill="none" stroke="#afb1b3" stroke-width="3"/></svg>
<div style="left:3432.6px;top:127.6px;width:6.8px;height:6.8px;background:#afb1b3;border-radius:50%"></div>
<div style="left:3432.6px;top:136.9px;width:6.8px;height:6.8px;background:#afb1b3;border-radius:50%"></div>
<div style="left:3432.6px;top:146.1px;width:6.8px;height:6.8px;background:#afb1b3;border-radius:50%"></div>
<div style="left:912px;top:168px;width:2548px;height:52px;background:#14385d;"></div>
<div style="left:912px;top:220px;width:2548px;height:2px;background:#4b5053;"></div>
<span id="banner" style="left:934px;top:177.0px;font-size:26.0px;line-height:34px;color:#c9ccce;letter-spacing:0.887px;">Decompiled .class file, bytecode version: 46.0 (Java 1.2)</span>
<span id="dl" style="left:2923px;top:177.0px;font-size:26.0px;line-height:34px;color:#3d9cf5;letter-spacing:0.784px;">Download Sources</span>
<span id="cs" style="left:3197px;top:177.0px;font-size:25.5px;line-height:34px;color:#3d9cf5;letter-spacing:0.951px;">Choose Sources...</span>
<div style="left:912px;top:222px;width:136px;height:972px;background:#313335;"></div>
<div style="left:1048px;top:222px;width:2412px;height:972px;background:#2b2b2b;"></div>
<div style="left:1049px;top:558px;width:2411px;height:108px;background:#3a2323;"></div>
<div style="left:1047px;top:222px;width:2px;height:972px;background:#555555;"></div>
<div style="left:3366px;top:222px;width:2px;height:972px;background:#3f3f3f;"></div>
<div style="left:1132.5px;top:288px;width:2px;height:108px;background:#3b3b3b;"></div>
<div style="left:1132.5px;top:558px;width:2px;height:378px;background:#474343;"></div>
<div style="left:1132.5px;top:666px;width:2px;height:270px;background:#3b3b3b;"></div>
<div style="left:1209px;top:612px;width:2px;height:54px;background:#4a4444;"></div>
<div style="left:1209px;top:666px;width:2px;height:108px;background:#3b3b3b;"></div>
<div style="left:1209px;top:828px;width:2px;height:54px;background:#3b3b3b;"></div>
<span style="left:925px;top:242px;font-size:31.9px;line-height:42px;color:#606366;font-family:'DejaVu Sans Mono','Liberation Mono',monospace;letter-spacing:-2.2px">52</span>
<span style="left:1139.3px;top:242px;font-size:31.9px;line-height:42px;font-family:'DejaVu Sans Mono','Liberation Mono',monospace;letter-spacing:-0.004px"><span style="position:static;color:#dd7a18">private void </span><span style="position:static;color:#ffc663">readObject</span><span style="position:static;color:#a9b8c8">(ObjectInputStream in) </span><span style="position:static;color:#dd7a18">throws </span><span style="position:static;color:#a9b8c8">IOException</span><span style="position:static;color:#dd7a18">, </span><span style="position:static;color:#a9b8c8">ClassNotFoundException {</span></span>
<span style="left:925px;top:296px;font-size:31.9px;line-height:42px;color:#606366;font-family:'DejaVu Sans Mono','Liberation Mono',monospace;letter-spacing:-2.2px">53</span>
<span style="left:1216.1px;top:296px;font-size:31.9px;line-height:42px;font-family:'DejaVu Sans Mono','Liberation Mono',monospace;letter-spacing:-0.004px"><span style="position:static;color:#a9b8c8">in.defaultReadObject()</span><span style="position:static;color:#dd7a18">;</span></span>
<span style="left:925px;top:350px;font-size:31.9px;line-height:42px;color:#606366;font-family:'DejaVu Sans Mono','Liberation Mono',monospace;letter-spacing:-2.2px">54</span>
<span style="left:1216.1px;top:350px;font-size:31.9px;line-height:42px;font-family:'DejaVu Sans Mono','Liberation Mono',monospace;letter-spacing:-0.004px"><span style="position:static;color:#dd7a18">this</span><span style="position:static;color:#a9b8c8">.</span><span style="position:static;color:#a676b8">map</span><span style="position:static;color:#a9b8c8"> = (Map)in.readObject()</span><span style="position:static;color:#dd7a18">;</span></span>
<span style="left:925px;top:404px;font-size:31.9px;line-height:42px;color:#606366;font-family:'DejaVu Sans Mono','Liberation Mono',monospace;letter-spacing:-2.2px">55</span>
<span style="left:1139.3px;top:404px;font-size:31.9px;line-height:42px;font-family:'DejaVu Sans Mono','Liberation Mono',monospace;letter-spacing:-0.004px"><span style="position:static;color:#a9b8c8">}</span></span>
<span style="left:925px;top:458px;font-size:31.9px;line-height:42px;color:#606366;font-family:'DejaVu Sans Mono','Liberation Mono',monospace;letter-spacing:-2.2px">56</span>
<span style="left:925px;top:512px;font-size:31.9px;line-height:42px;color:#606366;font-family:'DejaVu Sans Mono','Liberation Mono',monospace;letter-spacing:-2.2px">57</span>
<span style="left:1139.3px;top:512px;font-size:31.9px;line-height:42px;font-family:'DejaVu Sans Mono','Liberation Mono',monospace;letter-spacing:-0.004px"><span style="position:static;color:#dd7a18">public </span><span style="position:static;color:#a9b8c8">Object </span><span style="position:static;color:#ffc663">get</span><span style="position:static;color:#a9b8c8">(Object key) {</span></span>
<span style="left:925px;top:566px;font-size:31.9px;line-height:42px;color:#606366;font-family:'DejaVu Sans Mono','Liberation Mono',monospace;letter-spacing:-2.2px">58</span>
<span style="left:1216.1px;top:566px;font-size:31.9px;line-height:42px;font-family:'DejaVu Sans Mono','Liberation Mono',monospace;letter-spacing:-0.004px"><span style="position:static;color:#dd7a18">if </span><span style="position:static;color:#a9b8c8">(!</span><span style="position:static;color:#dd7a18">this</span><span style="position:static;color:#a9b8c8">.</span><span style="position:static;color:#a676b8">map</span><span style="position:static;color:#a9b8c8">.containsKey(key)) {</span></span>
<span style="left:925px;top:620px;font-size:31.9px;line-height:42px;color:#a4a3a3;font-family:'DejaVu Sans Mono','Liberation Mono',monospace;letter-spacing:-2.2px">59</span>
<span style="left:1292.9px;top:620px;font-size:31.9px;line-height:42px;font-family:'DejaVu Sans Mono','Liberation Mono',monospace;letter-spacing:-0.004px"><span style="position:static;color:#a9b8c8">Object value = </span><span style="position:static;color:#dd7a18">this</span><span style="position:static;color:#a9b8c8">.</span><span style="position:static;color:#a676b8">factory</span><span style="position:static;color:#a9b8c8">.transform(key)</span><span style="position:static;color:#dd7a18">;</span></span>
<span style="left:925px;top:674px;font-size:31.9px;line-height:42px;color:#606366;font-family:'DejaVu Sans Mono','Liberation Mono',monospace;letter-spacing:-2.2px">60</span>
<span style="left:1292.9px;top:674px;font-size:31.9px;line-height:42px;font-family:'DejaVu Sans Mono','Liberation Mono',monospace;letter-spacing:-0.004px"><span style="position:static;color:#dd7a18">this</span><span style="position:static;color:#a9b8c8">.</span><span style="position:static;color:#a676b8">map</span><span style="position:static;color:#a9b8c8">.put(key</span><span style="position:static;color:#dd7a18">, </span><span style="position:static;color:#a9b8c8">value)</span><span style="position:static;color:#dd7a18">;</span></span>
<span style="left:925px;top:728px;font-size:31.9px;line-height:42px;color:#606366;font-family:'DejaVu Sans Mono','Liberation Mono',monospace;letter-spacing:-2.2px">61</span>
<span style="left:1292.9px;top:728px;font-size:31.9px;line-height:42px;font-family:'DejaVu Sans Mono','Liberation Mono',monospace;letter-spacing:-0.004px"><span style="position:static;color:#dd7a18">return </span><span style="position:static;color:#a9b8c8">value</span><span style="position:static;color:#dd7a18">;</span></span>
<span style="left:925px;top:782px;font-size:31.9px;line-height:42px;color:#606366;font-family:'DejaVu Sans Mono','Liberation Mono',monospace;letter-spacing:-2.2px">62</span>
<span style="left:1216.1px;top:782px;font-size:31.9px;line-height:42px;font-family:'DejaVu Sans Mono','Liberation Mono',monospace;letter-spacing:-0.004px"><span style="position:static;color:#a9b8c8">} </span><span style="position:static;color:#dd7a18">else </span><span style="position:static;color:#a9b8c8">{</span></span>
<span style="left:925px;top:836px;font-size:31.9px;line-height:42px;color:#606366;font-family:'DejaVu Sans Mono','Liberation Mono',monospace;letter-spacing:-2.2px">63</span>
<span style="left:1292.9px;top:836px;font-size:31.9px;line-height:42px;font-family:'DejaVu Sans Mono','Liberation Mono',monospace;letter-spacing:-0.004px"><span style="position:static;color:#dd7a18">return this</span><span style="position:static;color:#a9b8c8">.</span><span style="position:static;color:#a676b8">map</span><span style="position:static;color:#a9b8c8">.get(key)</span><span style="position:static;color:#dd7a18">;</span></span>
<span style="left:925px;top:890px;font-size:31.9px;line-height:42px;color:#606366;font-family:'DejaVu Sans Mono','Liberation Mono',monospace;letter-spacing:-2.2px">64</span>
<span style="left:1216.1px;top:890px;font-size:31.9px;line-height:42px;font-family:'DejaVu Sans Mono','Liberation Mono',monospace;letter-spacing:-0.004px"><span style="position:static;color:#a9b8c8">}</span></span>
<span style="left:925px;top:944px;font-size:31.9px;line-height:42px;color:#606366;font-family:'DejaVu Sans Mono','Liberation Mono',monospace;letter-spacing:-2.2px">65</span>
<span style="left:1139.3px;top:944px;font-size:31.9px;line-height:42px;font-family:'DejaVu Sans Mono','Liberation Mono',monospace;letter-spacing:-0.004px"><span style="position:static;color:#a9b8c8">}</span></span>
<span style="left:925px;top:998px;font-size:31.9px;line-height:42px;color:#606366;font-family:'DejaVu Sans Mono','Liberation Mono',monospace;letter-spacing:-2.2px">66</span>
<span style="left:1062.5px;top:998px;font-size:31.9px;line-height:42px;font-family:'DejaVu Sans Mono','Liberation Mono',monospace;letter-spacing:-0.004px"><span style="position:static;color:#a9b8c8">}</span></span>
<span style="left:925px;top:1052px;font-size:31.9px;line-height:42px;color:#606366;font-family:'DejaVu Sans Mono','Liberation Mono',monospace;letter-spacing:-2.2px">67</span>
<span style="left:982px;top:239px;font-size:32px;line-height:40px;color:#afb1b3;font-weight:700;-webkit-text-stroke:0">@</span>
<svg style="left:1036px;top:252px;" width="24" height="28" viewBox="0 0 24 28"><path d="M1 1 H23 V16 L12 27 L1 16 Z" fill="#2b2b2b" stroke="#5e5e5e" stroke-width="2"/><path d="M6.500 12 H17.500" stroke="#7a7a7a" stroke-width="1.800"/></svg>
<svg style="left:1036px;top:522px;" width="24" height="28" viewBox="0 0 24 28"><path d="M1 1 H23 V16 L12 27 L1 16 Z" fill="#2b2b2b" stroke="#5e5e5e" stroke-width="2"/><path d="M6.500 12 H17.500" stroke="#7a7a7a" stroke-width="1.800"/></svg>
<svg style="left:1036px;top:576px;" width="24" height="28" viewBox="0 0 24 28"><path d="M1 1 H23 V16 L12 27 L1 16 Z" fill="#2b2b2b" stroke="#5e5e5e" stroke-width="2"/><path d="M6.500 12 H17.500" stroke="#7a7a7a" stroke-width="1.800"/></svg>
<svg style="left:1036px;top:792px;" width="24" height="28" viewBox="0 0 24 28"><path d="M1 1 H23 V16 L12 27 L1 16 Z" fill="#2b2b2b" stroke="#5e5e5e" stroke-width="2"/><path d="M6.500 12 H17.500" stroke="#7a7a7a" stroke-width="1.800"/></svg>
<svg style="left:1036px;top:409.5px;" width="24" height="28" viewBox="0 0 24 28"><path d="M1 27 H23 V12 L12 1 L1 12 Z" fill="#2b2b2b" stroke="#5e5e5e" stroke-width="2"/><path d="M6.500 17 H17.500" stroke="#7a7a7a" stroke-width="1.800"/></svg>
<svg style="left:1036px;top:895.5px;" width="24" height="28" viewBox="0 0 24 28"><path d="M1 27 H23 V12 L12 1 L1 12 Z" fill="#2b2b2b" stroke="#5e5e5e" stroke-width="2"/><path d="M6.500 17 H17.500" stroke="#7a7a7a" stroke-width="1.800"/></svg>
<svg style="left:1036px;top:949.5px;" width="24" height="28" viewBox="0 0 24 28"><path d="M1 27 H23 V12 L12 1 L1 12 Z" fill="#2b2b2b" stroke="#5e5e5e" stroke-width="2"/><path d="M6.500 17 H17.500" stroke="#7a7a7a" stroke-width="1.800"/></svg>
<svg style="left:973px;top:508.5px;" width="40" height="40" viewBox="0 0 40 40"><circle cx="12" cy="23" r="11" fill="#1896be"/><circle cx="12" cy="23" r="4.600" fill="none" stroke="#313335" stroke-width="2.600"/><path d="M27 39 V10" stroke="#e0484f" stroke-width="3"/><path d="M27 4 L34 14 H20 Z" fill="#e0484f"/></svg>
<svg style="left:982px;top:564.5px;" width="36" height="38" viewBox="0 0 36 38"><circle cx="17" cy="21" r="15.500" fill="#db4b52"/><path d="M12.500 9.500 L18.500 15.500 L30.500 3.500" fill="none" stroke="#313335" stroke-width="7"/><path d="M13.500 9.500 L18.500 14.500 L30 3.500" fill="none" stroke="#b4b6b8" stroke-width="3.400"/></svg>
<svg style="left:982px;top:618.5px;" width="36" height="38" viewBox="0 0 36 38"><circle cx="17" cy="21" r="15.500" fill="#db4b52"/><path d="M12.500 9.500 L18.500 15.500 L30.500 3.500" fill="none" stroke="#313335" stroke-width="7"/><path d="M13.500 9.500 L18.500 14.500 L30 3.500" fill="none" stroke="#b4b6b8" stroke-width="3.400"/></svg>
<div style="left:912px;top:114px;width:2px;height:1080px;background:#2b2d2e;"></div>
<div style="left:3440px;top:866px;width:14px;height:273px;background:rgba(120,120,120,0.35);border-radius:7px"></div>
<div style="left:3431px;top:958px;width:28px;height:3px;background:#6e4436;"></div>
<div style="left:3431px;top:973px;width:28px;height:3px;background:#6e4436;"></div>
<div style="left:41px;top:1194px;width:3419px;height:912px;background:#3c3f41;"></div>
<div style="left:41px;top:1194px;width:3419px;height:2px;background:#323536;"></div>
<span id="svc" style="left:55px;top:1206.0px;font-size:25.5px;line-height:34px;color:#bbbbbb;letter-spacing:1.031px;">Services</span>
<svg style="left:3301px;top:1207px;" width="30" height="30" viewBox="0 0 30 30"><g transform="translate(15,15)"><circle r="12.7" fill="none" stroke="#afb1b3" stroke-width="2.6"/><path d="M0 -13 V-4.5 M0 4.5 V13 M-13 0 H-4.5 M4.5 0 H13" stroke="#afb1b3" stroke-width="3.6"/></g></svg>
<div style="left:3347px;top:1203px;width:2px;height:38px;background:#515658;"></div>
<svg style="left:3368px;top:1209px;" width="26" height="26" viewBox="0 0 26 26"><g transform="translate(13,13)"><path d="M-3.05 -13.00 H3.05 L3.77 -7.15 H-3.77 Z" transform="rotate(0)" fill="#afb1b3"/><path d="M-3.05 -13.00 H3.05 L3.77 -7.15 H-3.77 Z" transform="rotate(60)" fill="#afb1b3"/><path d="M-3.05 -13.00 H3.05 L3.77 -7.15 H-3.77 Z" transform="rotate(120)" fill="#afb1b3"/><path d="M-3.05 -13.00 H3.05 L3.77 -7.15 H-3.77 Z" transform="rotate(180)" fill="#afb1b3"/><path d="M-3.05 -13.00 H3.05 L3.77 -7.15 H-3.77 Z" transform="rotate(240)" fill="#afb1b3"/><path d="M-3.05 -13.00 H3.05 L3.77 -7.15 H-3.77 Z" transform="rotate(300)" fill="#afb1b3"/><circle r="9.29" fill="#afb1b3"/><circle r="4.36" fill="#3c3f41"/></g></svg>
<div style="left:3422.0px;top:1220.5px;width:24px;height:3px;background:#afb1b3;"></div>
<div style="left:41px;top:1247px;width:3419px;height:2px;background:#2b2d2e;"></div>
<div style="left:98px;top:1249px;width:2px;height:857px;background:#323536;"></div>
<svg style="left:57px;top:1266px;" width="29" height="29" viewBox="0 0 34 34"><path d="M15 28.500 A10.500 10.500 0 1 1 18 8.300" fill="none" stroke="#17a54c" stroke-width="4"/><path d="M17 0 L32 9 L17 17.500 Z" fill="#17a54c"/><rect x="19" y="20" width="13" height="13" fill="#afb1b3"/></svg>
<svg style="left:57px;top:1318px;" width="29" height="29" viewBox="0 0 34 34"><path d="M8 2 L12 7 M22 2 L18 7" stroke="#17a54c" stroke-width="3.200" fill="none"/><path d="M6.500 15 A8.500 9 0 0 1 23.500 15 V19 H17 V30.500 A8.500 9 0 0 1 6.500 22 Z" fill="#17a54c"/><path d="M0.500 12 H7 M0.500 19 H7 M0.500 26 H7 M23 12 H29.500" stroke="#17a54c" stroke-width="3"/><rect x="9.500" y="14" width="9" height="2.800" fill="#3c3f41"/><rect x="19" y="20.500" width="13" height="13" fill="#afb1b3"/></svg>
<div style="left:60px;top:1374px;width:20px;height:20px;background:#db4f4f;"></div>
<svg style="left:55px;top:1420px;" width="32" height="32" viewBox="0 0 32 32"><g fill="none" stroke="#3fb53f" stroke-width="3"><path d="M0 16 H26"/><path d="M19 9 L27 16 L19 23"/><path d="M9 12 L16 3 M9.500 3 H16.500 V10"/><path d="M9 20 L16 29 M9.500 29 H16.500 V22"/></g></svg>
<svg style="left:55px;top:1473px;" width="30" height="30" viewBox="0 0 30 30"><path d="M15 1 L21.500 7.500 L15 14 L8.500 7.500 Z" fill="#87939a"/><path d="M15 16 L21.500 22.500 L15 29 L8.500 22.500 Z" fill="#87939a"/><path d="M7.500 8.500 L14 15 L7.500 21.500 L1 15 Z" fill="#1ab6ec"/><path d="M22.500 8.500 L29 15 L22.500 21.500 L16 15 Z" fill="#1ab6ec"/></svg>
<svg style="left:56px;top:1526px;" width="30" height="30" viewBox="0 0 30 30"><path d="M2 25 L15 12" stroke="#afb1b3" stroke-width="6" /><path d="M27.500 4 L22 9.500 L19.500 7 L24.500 1.500 A8 8 0 1 0 27.500 4 Z" fill="#afb1b3"/></svg>
<div style="left:50px;top:1572px;width:40px;height:2px;background:#55595b;"></div>
<div style="left:50px;top:1637px;width:40px;height:2px;background:#55595b;"></div>
<div style="left:50px;top:1755px;width:40px;height:2px;background:#55595b;"></div>
<div style="left:50px;top:1874px;width:40px;height:2px;background:#55595b;"></div>
<div style="left:50px;top:1939px;width:40px;height:2px;background:#55595b;"></div>
<svg style="left:57px;top:1591px;" width="28" height="28" viewBox="0 0 28 28"><path d="M23.500 16 A10 10 0 1 1 17 5.200" fill="none" stroke="#afb1b3" stroke-width="3.200"/><path d="M14 0 L25 2 L22 12.500 Z" fill="#afb1b3"/></svg>
<svg style="left:59px;top:1659px;" width="26" height="24" viewBox="0 0 26 24"><rect x="0" y="1" width="6" height="22" fill="#5a5d5f"/><path d="M10 1 L24.500 12 L10 23 Z" fill="#5a5d5f"/></svg>
<div style="left:62px;top:1711px;width:6.5px;height:23px;background:#afb1b3;"></div>
<div style="left:72.5px;top:1711px;width:6.5px;height:23px;background:#afb1b3;"></div>
<svg style="left:57px;top:1775px;" width="28" height="28" viewBox="0 0 28 28"><circle cx="18" cy="9.500" r="9" fill="#db4b52"/><circle cx="10" cy="17.500" r="10.800" fill="#3c3f41"/><circle cx="10" cy="17.500" r="9.300" fill="#db4b52"/></svg>
<svg style="left:57px;top:1829px;" width="28" height="28" viewBox="0 0 28 28"><circle cx="13" cy="14" r="10" fill="#db4b52"/><path d="M2 26.500 L25 2.500" stroke="#3c3f41" stroke-width="6.500"/><path d="M1.500 26.500 L25 2.500" stroke="#afb1b3" stroke-width="2.800"/></svg>
<svg style="left:56px;top:1895px;" width="30" height="26" viewBox="0 0 30 26"><path d="M0 5 H7 L9.500 0.500 H20.500 L23 5 H30 V25.500 H0 Z" fill="#afb1b3"/><circle cx="15" cy="15" r="6.500" fill="#3c3f41"/><circle cx="15" cy="15" r="3.600" fill="#afb1b3"/></svg>
<div style="left:57.5px;top:1964px;width:13px;height:8.5px;background:#afb1b3;"></div>
<div style="left:73px;top:1964px;width:10.5px;height:8.5px;background:#afb1b3;"></div>
<div style="left:57.5px;top:1975px;width:26px;height:9.5px;background:#afb1b3;"></div>
<svg style="left:57.5px;top:2013.5px;" width="25.0" height="25.0" viewBox="0 0 25.0 25.0"><g transform="translate(12.5,12.5)"><path d="M-2.94 -12.50 H2.94 L3.62 -6.88 H-3.62 Z" transform="rotate(0)" fill="#afb1b3"/><path d="M-2.94 -12.50 H2.94 L3.62 -6.88 H-3.62 Z" transform="rotate(60)" fill="#afb1b3"/><path d="M-2.94 -12.50 H2.94 L3.62 -6.88 H-3.62 Z" transform="rotate(120)" fill="#afb1b3"/><path d="M-2.94 -12.50 H2.94 L3.62 -6.88 H-3.62 Z" transform="rotate(180)" fill="#afb1b3"/><path d="M-2.94 -12.50 H2.94 L3.62 -6.88 H-3.62 Z" transform="rotate(240)" fill="#afb1b3"/><path d="M-2.94 -12.50 H2.94 L3.62 -6.88 H-3.62 Z" transform="rotate(300)" fill="#afb1b3"/><circle r="8.94" fill="#afb1b3"/><circle r="4.19" fill="#3c3f41"/></g></svg>
<svg style="left:77.0px;top:2038.25px;" width="10" height="5.5" viewBox="0 0 10 5.5"><path d="M0 0 H10 L5.0 5.5 Z" fill="#d0d2d4"/></svg>
<svg style="left:114px;top:1263px;" width="24" height="26" viewBox="0 0 24 26"><rect x="0" y="0" width="24" height="2.8" fill="#afb1b3"/><rect x="0" y="23.2" width="24" height="2.8" fill="#afb1b3"/><path d="M12 4.5 L19 11.5 H5 Z M12 21.5 L19 14.5 H5 Z" fill="#afb1b3"/></svg>
<svg style="left:166px;top:1263px;" width="24" height="26" viewBox="0 0 24 26"><rect x="0" y="11.6" width="24" height="2.8" fill="#afb1b3"/><path d="M12 9.5 L19 2.5 H5 Z M12 16.5 L19 23.5 H5 Z" fill="#afb1b3"/></svg>
<div style="left:210px;top:1256px;width:2px;height:38px;background:#515658;"></div>
<svg style="left:233px;top:1265px;" width="30" height="30" viewBox="0 0 30 30"><rect x="0" y="1" width="8.500" height="8.500" fill="#afb1b3"/><rect x="11.500" y="1" width="8.500" height="8.500" fill="#afb1b3"/><rect x="0" y="12.500" width="8.500" height="8.500" fill="#afb1b3"/><rect x="11.500" y="12.500" width="8.500" height="8.500" fill="#afb1b3"/><path d="M18 22.500 H28 L23 28 Z" fill="#d0d2d4"/></svg>
<svg style="left:283px;top:1264px;" width="32" height="30" viewBox="0 0 32 30"><path d="M1 1 H25 L15.500 12.500 V23.500 H10.500 V12.500 Z" fill="#afb1b3"/><path d="M20 23.500 H30 L25 29 Z" fill="#d0d2d4"/></svg>
<svg style="left:331px;top:1261px;" width="34" height="28" viewBox="0 0 34 28"><path d="M1.500 27 Q5 27 5 21 V7 Q5 2 10 2 H24 Q29 2 29 7 V21 Q29 27 32.500 27" fill="none" stroke="#afb1b3" stroke-width="2.600"/><path d="M17 8 V21 M10.500 14.500 H23.500" stroke="#afb1b3" stroke-width="3"/></svg>
<div style="left:380px;top:1256px;width:2px;height:38px;background:#515658;"></div>
<svg style="left:404px;top:1264px;" width="30" height="32" viewBox="0 0 30 32"><path d="M10.500 1 V21 M0.500 11 H20.500" stroke="#afb1b3" stroke-width="3.400"/><path d="M15 23.500 H26 L20.500 29.500 Z" fill="#d0d2d4"/></svg>
<div style="left:99px;top:1303px;width:675px;height:2px;background:#2b2d2e;"></div>
<div style="left:99px;top:1386px;width:675px;height:40px;background:#06283f;"></div>
<svg style="left:115.0px;top:1319.0px;" width="17" height="9" viewBox="0 0 17 9"><path d="M0.8 0.8 L8.5 8 L16.2 0.8" fill="none" stroke="#afb1b3" stroke-width="2.6"/></svg>
<svg style="left:150px;top:1312px;" width="32" height="32" viewBox="0 0 32 32"><g transform="translate(0,3.500)"><path d="M8.500 11.500 Q1.500 8 4.500 3.800 Q6.500 2.300 8.300 4.200" fill="none" stroke="#1c1c1c" stroke-width="1.200"/><path d="M0.500 20 Q3.500 11.500 12 9.500 L18 11.500 Q23 14 27.500 20 Q20.500 17 15 16.500 Q7 16 0.500 20 Z" fill="#e3a41c" stroke="#3a2a08" stroke-width="0.700"/><path d="M10 16.500 Q11.500 19.500 9 21 M18 12 Q20 13.500 22.500 12" fill="none" stroke="#1c1c1c" stroke-width="1.300"/><path d="M14.200 0.600 L16.700 3.200 H22.500 L25 0.600 L25.300 8 Q23 12.800 20 12.800 Q16 12.300 14.200 7.500 Z" fill="#f6dd70" stroke="#3a2a08" stroke-width="0.700"/><path d="M17 6.500 L19 7 M21 7 L23 6.500 M19 10 Q20 11 21 10" fill="none" stroke="#6b5514" stroke-width="0.700"/></g></svg>
<span id="sv1" style="left:187px;top:1309.0px;font-size:26.0px;line-height:34px;color:#bbbbbb;letter-spacing:0.865px;">Tomcat Server</span>
<svg style="left:151.0px;top:1359.0px;" width="17" height="9" viewBox="0 0 17 9"><path d="M0.8 0.8 L8.5 8 L16.2 0.8" fill="none" stroke="#afb1b3" stroke-width="2.6"/></svg>
<svg style="left:191.5px;top:1354px;" width="20" height="24" viewBox="0 0 20 24"><path d="M0 0 L20 12.0 L0 24 Z" fill="#17a54c"/></svg>
<span id="sv2" style="left:223px;top:1349.0px;font-size:25.5px;line-height:34px;color:#bbbbbb;letter-spacing:0.835px;">Running</span>
<svg style="left:187.0px;top:1399.0px;" width="17" height="9" viewBox="0 0 17 9"><path d="M0.8 0.8 L8.5 8 L16.2 0.8" fill="none" stroke="#afb1b3" stroke-width="2.6"/></svg>
<svg style="left:222px;top:1392px;" width="32" height="32" viewBox="0 0 32 32"><g transform="translate(0,3.500)"><path d="M8.500 11.500 Q1.500 8 4.500 3.800 Q6.500 2.300 8.300 4.200" fill="none" stroke="#1c1c1c" stroke-width="1.200"/><path d="M0.500 20 Q3.500 11.500 12 9.500 L18 11.500 Q23 14 27.500 20 Q20.500 17 15 16.500 Q7 16 0.500 20 Z" fill="#e3a41c" stroke="#3a2a08" stroke-width="0.700"/><path d="M10 16.500 Q11.500 19.500 9 21 M18 12 Q20 13.500 22.500 12" fill="none" stroke="#1c1c1c" stroke-width="1.300"/><path d="M14.200 0.600 L16.700 3.200 H22.500 L25 0.600 L25.300 8 Q23 12.800 20 12.800 Q16 12.300 14.200 7.500 Z" fill="#f6dd70" stroke="#3a2a08" stroke-width="0.700"/><path d="M17 6.500 L19 7 M21 7 L23 6.500 M19 10 Q20 11 21 10" fill="none" stroke="#6b5514" stroke-width="0.700"/></g><path d="M17 13.500 L31.500 22.700 L17 32 Z" fill="#06283f"/><path d="M19.500 16 L29.500 22.700 L19.500 29.500 Z" fill="#3fb53f"/><rect x="17" y="18" width="2" height="2" fill="#afb1b3"/><rect x="17" y="21.700" width="2" height="2" fill="#afb1b3"/><rect x="17" y="25.400" width="2" height="2" fill="#afb1b3"/></svg>
<span id="sv3a" style="left:259px;top:1388.0px;font-size:27.0px;line-height:36px;color:#bbbbbb;font-weight:700;letter-spacing:1.034px;">Tomcat 8.5.79</span>
<span id="sv3b" style="left:458px;top:1389.0px;font-size:25.5px;line-height:34px;color:#8a8a8a;letter-spacing:0.895px;">[local]</span>
<svg style="left:258px;top:1431px;" width="32" height="32" viewBox="0 0 32 32"><path d="M12 1 L18.500 7.500 L12 14 L5.500 7.500 Z" fill="#87939a"/><path d="M6.500 8.500 L13 15 L6.500 21.500 L0 15 Z" fill="#1ab6ec"/><path d="M17.500 8.500 L24 15 L17.500 21.500 Z" fill="#1ab6ec"/><path d="M12 16 L18.500 22.500 L12 29 L5.500 22.500 Z" fill="#87939a"/><circle cx="20.500" cy="22.500" r="9.800" fill="#3c3f41"/><circle cx="20.500" cy="22.500" r="7.700" fill="none" stroke="#9aa7b0" stroke-width="1.700"/><path d="M15.500 20 q3.500 -3.500 6.500 -1 q0 2 -2.500 2.500 q-0.500 2.500 -2.500 2.500 q-1.500 -1.500 -1.500 -4z M22.500 23 q3 -1.500 4 1 q-1 3 -3.500 4 q-1 -2 -0.500 -5z" fill="#9aa7b0"/></svg>
<svg style="left:292px;top:1433px;" width="28" height="24" viewBox="0 0 28 24"><path d="M2 12 L9.500 19.500 L23.500 4" fill="none" stroke="#3c9c3c" stroke-width="5"/></svg>
<div style="left:326px;top:1426px;width:448px;height:40px;overflow:hidden"><span id="sv4" style="left:0;top:1px;font-size:26px;line-height:38px;color:#bbbbbb;letter-spacing:0.940px">samples-web:war exploded <span style="position:static;color:#8a8a8a">[Synchronized]</span></span></div>
<div style="left:774px;top:1249px;width:2px;height:857px;background:#323536;"></div>
<span id="dbg1" style="left:802px;top:1266.0px;font-size:21px;line-height:28px;color:#bbbbbb;letter-spacing:1.109px;">Debugger</span>
<div style="left:776px;top:1306px;width:154px;height:6px;background:#848b93;"></div>
<div style="left:776px;top:1311px;width:2684px;height:2px;background:#2b2d2e;"></div>
<div style="left:776px;top:1306px;width:154px;height:6px;background:#848b93;"></div>
<span id="dbg2" style="left:954px;top:1266.0px;font-size:21px;line-height:28px;color:#bbbbbb;letter-spacing:0.829px;">Server</span>
<svg style="left:1073px;top:1269px;" width="26" height="22" viewBox="0 0 26 22"><rect x="0" y="0" width="26" height="22" fill="#afb1b3"/><path d="M8 5.500 L14 11 L8 16.500" fill="none" stroke="#3c3f41" stroke-width="3"/></svg>
<span id="dbg3" style="left:1110px;top:1266.0px;font-size:21px;line-height:28px;color:#bbbbbb;letter-spacing:0.932px;">Tomcat Localhost Log</span>
<svg style="left:1378px;top:1269px;" width="26" height="22" viewBox="0 0 26 22"><rect x="0" y="0" width="26" height="22" fill="#afb1b3"/><path d="M8 5.500 L14 11 L8 16.500" fill="none" stroke="#3c3f41" stroke-width="3"/></svg>
<span id="dbg4" style="left:1414px;top:1266.0px;font-size:21px;line-height:28px;color:#bbbbbb;letter-spacing:0.753px;">Tomcat Catalina Log</span>
<div style="left:1649px;top:1270px;width:26px;height:3.6px;background:#606366;"></div>
<div style="left:1649px;top:1279px;width:26px;height:3.6px;background:#606366;"></div>
<div style="left:1649px;top:1288px;width:26px;height:3.6px;background:#606366;"></div>
<div style="left:1694px;top:1260px;width:2px;height:40px;background:#515658;"></div>
<svg style="left:1714px;top:1266px;" width="28" height="28" viewBox="0 0 28 28"><path d="M1 25 H27" stroke="#5e6164" stroke-width="3"/><path d="M2 19 Q8 4 20 9" fill="none" stroke="#5e6164" stroke-width="2.800"/><path d="M15 3 L26 11 L14 15 Z" fill="#5e6164"/></svg>
<svg style="left:1766.5px;top:1266px;" width="26" height="28" viewBox="0 0 26 28"><path d="M1 25 H25" stroke="#5e6164" stroke-width="3"/><path d="M13 1 V14" stroke="#5e6164" stroke-width="3.200"/><path d="M5 11 H21 L13 20.500 Z" fill="#5e6164"/></svg>
<svg style="left:1818.6px;top:1266px;" width="26" height="28" viewBox="0 0 26 28"><path d="M1 25 H25" stroke="#5e6164" stroke-width="3"/><path d="M13 1 V14" stroke="#5e6164" stroke-width="3.200"/><path d="M5 11 H21 L13 20.500 Z" fill="#5e6164"/></svg>
<svg style="left:1870.7px;top:1266px;" width="26" height="28" viewBox="0 0 26 28"><path d="M1 25 H25" stroke="#5e6164" stroke-width="3"/><path d="M13 8 V20.500" stroke="#5e6164" stroke-width="3.200"/><path d="M5 11 H21 L13 1.500 Z" fill="#5e6164"/></svg>
<svg style="left:1921px;top:1266px;" width="30" height="30" viewBox="0 0 30 30"><path d="M2 2 L13 13" stroke="#5e6164" stroke-width="3.200"/><path d="M16 5 V16 H5 Z" fill="#5e6164"/><path d="M19 14 h6 M22 14 v13 M19 27 h6" stroke="#5e6164" stroke-width="1.600" fill="none"/></svg>
<div style="left:1968px;top:1260px;width:2px;height:40px;background:#515658;"></div>
<svg style="left:1989px;top:1267px;" width="26" height="26" viewBox="0 0 26 26"><rect x="1" y="1" width="24" height="24" fill="none" stroke="#5e6164" stroke-width="2.400"/><path d="M1 7.500 H25 M1 13.500 H25 M1 19.500 H25 M9 7.500 V25 M17 7.500 V25" stroke="#5e6164" stroke-width="2"/></svg>
<svg style="left:2041px;top:1268px;" width="28" height="24" viewBox="0 0 28 24"><path d="M0 3 H9 M15 3 H27 M0 12 H6 M12 12 H27 M0 21 H9 M15 21 H27 M6 21 L15 3" stroke="#5e6164" stroke-width="2.600" fill="none"/></svg>
<div style="left:3424.5px;top:1269px;width:11.5px;height:8.5px;background:#afb1b3;"></div>
<div style="left:3438.5px;top:1269px;width:10px;height:8.5px;background:#afb1b3;"></div>
<div style="left:3424.5px;top:1280px;width:24px;height:9.5px;background:#afb1b3;"></div>
<svg style="left:3448.0px;top:1293.75px;" width="10" height="5.5" viewBox="0 0 10 5.5"><path d="M0 0 H10 L5.0 5.5 Z" fill="#d0d2d4"/></svg>
<div style="left:776px;top:1368px;width:2684px;height:2px;background:#323536;"></div>
<svg style="left:1692px;top:1328px;" width="26" height="26" viewBox="0 0 26 26"><path d="M1 1 H24 L15 12 V24.500 H10 V12 Z" fill="#afb1b3"/></svg>
<svg style="left:1746.5px;top:1336.5px;" width="17" height="9" viewBox="0 0 17 9"><path d="M0 0 H17 L8.5 9 Z" fill="#afb1b3"/></svg>
<div style="left:1784px;top:1313px;width:2px;height:793px;background:#323536;"></div>
<div style="left:1786px;top:1313px;width:1674px;height:55px;background:#464a4b;"></div>
<span id="eval" style="left:1803px;top:1323.5px;font-size:25.7px;line-height:34px;color:#787c7e;font-family:'DejaVu Sans Mono','Liberation Mono',monospace;letter-spacing:0.059px;">Evaluate expression (⏎) or add a watch (⇧⌘⏎)</span>
<span id="javadd" style="left:3261px;top:1325.0px;font-size:24.0px;line-height:32px;color:#8c8c8c;letter-spacing:1.098px;">Java</span>
<svg style="left:3322.0px;top:1339.75px;" width="12" height="6.5" viewBox="0 0 12 6.5"><path d="M0 0 H12 L6.0 6.5 Z" fill="#afb1b3"/></svg>
<svg style="left:3367px;top:1325px;" width="30" height="30" viewBox="0 0 30 30"><path d="M11 1 V21 M1 11 H21" stroke="#5e6164" stroke-width="3.200"/><circle cx="16" cy="25" r="3.300" fill="none" stroke="#5e6164" stroke-width="1.600"/><circle cx="25" cy="25" r="3.300" fill="none" stroke="#5e6164" stroke-width="1.600"/></svg>
<svg style="left:3422.0px;top:1335.25px;" width="18" height="9.5" viewBox="0 0 18 9.5"><path d="M0 0 H18 L9.0 9.5 Z" fill="#afb1b3"/></svg>
<svg style="left:1838px;top:1378px;" width="24" height="24" viewBox="0 0 24 24"><circle cx="12" cy="12" r="11.500" fill="#1296bb"/><rect x="10.200" y="10" width="3.600" height="9" fill="#2b2d2e"/><circle cx="12" cy="6.300" r="2.200" fill="#2b2d2e"/></svg>
<span id="apprun" style="left:1873px;top:1373.0px;font-size:26.0px;line-height:34px;color:#bbbbbb;letter-spacing:0.948px;">The application is running</span>
<span id="frames" style="left:1128px;top:1589.0px;font-size:25.5px;line-height:34px;color:#7d8082;letter-spacing:0.885px;">Frames are not available</span>
<span id="switchf" style="left:792px;top:2070.0px;font-size:21.0px;line-height:28px;color:#787b7d;font-family:'Liberation Sans','DejaVu Sans',sans-serif;letter-spacing:0.764px;">Switch frames from anywhere in the IDE with ⌥⌘↑ and ⌥⌘↓</span>
<svg style="left:1753.0px;top:2078.0px;" width="14" height="14" viewBox="0 0 14 14"><path d="M0.7 0.7 L13.3 13.3 M13.3 0.7 L0.7 13.3" stroke="#6a6e70" stroke-width="2" fill="none"/></svg>
<div style="left:0px;top:2106px;width:3502px;height:2px;background:#323536;"></div>
<div style="left:0px;top:2108px;width:3502px;height:40px;background:#3c3f41;"></div>
<div style="left:998px;top:2108px;width:162px;height:40px;background:#2d2f30;"></div>
<svg style="left:69px;top:2116px;" width="20" height="26" viewBox="0 0 20 26"><circle cx="4" cy="4" r="3.200" fill="#afb1b3"/><circle cx="4" cy="22" r="3.200" fill="#afb1b3"/><circle cx="15.500" cy="8" r="3.200" fill="#afb1b3"/><path d="M4 4 V22 M15.500 8 Q15.500 15 4 16" fill="none" stroke="#afb1b3" stroke-width="2.600"/></svg>
<span id="b1" style="left:100px;top:2115.0px;font-size:21px;line-height:28px;color:#bbbbbb;letter-spacing:0.815px;">Version Control</span>
<svg style="left:301px;top:2118px;" width="18" height="22" viewBox="0 0 18 22"><path d="M0 0 L18 11 L0 22 Z" fill="#afb1b3"/></svg>
<span id="b2" style="left:332px;top:2115.0px;font-size:21px;line-height:28px;color:#bbbbbb;letter-spacing:0.237px;">Run</span>
<svg style="left:412.34px;top:2117.52px;" width="21.32" height="22.959999999999997" viewBox="0 0 21.32 22.959999999999997"><g transform="scale(0.82)"><path d="M8 2 L11 6 M18 2 L15 6" stroke="#afb1b3" stroke-width="2.6" fill="none"/><path d="M5.5 13 A7.5 8 0 0 1 20.5 13 V19 A7.5 8.5 0 0 1 5.5 19 Z" fill="#afb1b3"/><path d="M0.5 10 H6 M0.5 16 H6 M0.5 22 H6 M20 10 H25.5 M20 16 H25.5 M20 22 H25.5" stroke="#afb1b3" stroke-width="2.8"/><rect x="9" y="12" width="8" height="2.6" fill="#3c3f41"/><rect x="9" y="17.5" width="8" height="2.6" fill="#3c3f41"/></g></svg>
<span id="b3" style="left:444px;top:2115.0px;font-size:21px;line-height:28px;color:#bbbbbb;letter-spacing:1.026px;">Debug</span>
<div style="left:553px;top:2121px;width:3.4px;height:3.4px;background:#afb1b3;"></div>
<div style="left:559.5px;top:2121px;width:14.5px;height:3.4px;background:#afb1b3;"></div>
<div style="left:553px;top:2128px;width:3.4px;height:3.4px;background:#afb1b3;"></div>
<div style="left:559.5px;top:2128px;width:14.5px;height:3.4px;background:#afb1b3;"></div>
<div style="left:553px;top:2135px;width:3.4px;height:3.4px;background:#afb1b3;"></div>
<div style="left:559.5px;top:2135px;width:14.5px;height:3.4px;background:#afb1b3;"></div>
<span id="b4" style="left:585px;top:2115.0px;font-size:21px;line-height:28px;color:#bbbbbb;letter-spacing:-0.098px;">TODO</span>
<svg style="left:688px;top:2118px;" width="22" height="22" viewBox="0 0 22 22"><circle cx="11" cy="11" r="10.500" fill="#afb1b3"/><rect x="9.300" y="4.500" width="3.400" height="8" fill="#3c3f41"/><rect x="9.300" y="14.500" width="3.400" height="3.400" fill="#3c3f41"/></svg>
<span id="b5" style="left:720px;top:2115.0px;font-size:21px;line-height:28px;color:#bbbbbb;letter-spacing:0.900px;">Problems</span>
<svg style="left:860px;top:2118px;" width="23" height="21" viewBox="0 0 23 21"><rect x="0" y="0" width="23" height="21" fill="#afb1b3"/><path d="M4 5 L9 9.500 L4 14" fill="none" stroke="#3c3f41" stroke-width="2.400"/><path d="M10.500 15.500 H18" stroke="#3c3f41" stroke-width="2.400"/></svg>
<span id="b6" style="left:892px;top:2115.0px;font-size:21px;line-height:28px;color:#bbbbbb;letter-spacing:0.663px;">Terminal</span>
<svg style="left:1019px;top:2116px;" width="30" height="28" viewBox="0 0 30 28"><path d="M8 1.500 H20 L26 12 L20 22.500 H8 L2 12 Z" fill="#afb1b3"/><path d="M10 6 L19 12 L10 18 Z" fill="#2d2f30"/><circle cx="23" cy="22.500" r="5" fill="#2d2f30"/><circle cx="23" cy="22.500" r="3.600" fill="#30d030"/></svg>
<span id="b7" style="left:1054px;top:2115.0px;font-size:21px;line-height:28px;color:#ffffff;letter-spacing:0.923px;-webkit-text-stroke:0.4px #ffffff;">Services</span>
<svg style="left:1181px;top:2116px;" width="28" height="28" viewBox="0 0 28 28"><circle cx="11" cy="11.500" r="9.300" fill="none" stroke="#afb1b3" stroke-width="2.400"/><path d="M11 5 V12 L7 15.500" fill="none" stroke="#afb1b3" stroke-width="2"/><path d="M13 10 L27 19 L13 28 Z" fill="#3c3f41"/><path d="M15.500 13.500 L25.500 20 L15.500 26.500 Z" fill="#afb1b3"/></svg>
<span id="b8" style="left:1216px;top:2115.0px;font-size:21px;line-height:28px;color:#bbbbbb;letter-spacing:0.925px;">Profiler</span>
<svg style="left:1326px;top:2116px;" width="28" height="28" viewBox="0 0 28 28"><g transform="rotate(-45 13 13)"><rect x="5" y="1" width="17" height="7.500" rx="1" fill="#afb1b3"/><rect x="11" y="7" width="5" height="22" fill="#afb1b3"/></g></svg>
<span id="b9" style="left:1360px;top:2115.0px;font-size:21px;line-height:28px;color:#bbbbbb;letter-spacing:0.823px;">Build</span>
<svg style="left:1452px;top:2116px;" width="26" height="26" viewBox="0 0 26 26"><path d="M13 1 L25 7.500 L13 14 L1 7.500 Z" fill="#afb1b3"/><path d="M2 12.500 L13 18.500 L24 12.500 M2 18 L13 24 L24 18" fill="none" stroke="#afb1b3" stroke-width="2.600"/></svg>
<span id="b10" style="left:1487px;top:2115.0px;font-size:21px;line-height:28px;color:#bbbbbb;letter-spacing:0.884px;">Dependencies</span>
<div style="left:0px;top:2148px;width:3502px;height:1px;background:#45494b;"></div>
<svg style="left:12px;top:2157px;" width="26" height="26" viewBox="0 0 26 26"><rect x="6" y="1" width="18" height="18" fill="none" stroke="#afb1b3" stroke-width="2"/><path d="M2 6 V24 H20" fill="none" stroke="#afb1b3" stroke-width="2"/></svg>
<span id="st1" style="left:62px;top:2156.0px;font-size:21px;line-height:28px;color:#bbbbbb;letter-spacing:0.865px;">Breakpoint reached (moments ago)</span>
<span id="st2" style="left:3181px;top:2156.0px;font-size:21px;line-height:28px;color:#bbbbbb;letter-spacing:0.706px;">59:1</span>
<span id="st3" style="left:3248px;top:2156.0px;font-size:21px;line-height:28px;color:#7f8284;letter-spacing:-0.516px;">LF</span>
<span id="st4" style="left:3296px;top:2156.0px;font-size:21px;line-height:28px;color:#7f8284;letter-spacing:1.375px;">UTF-8</span>
<span id="st5" style="left:3386px;top:2156.0px;font-size:21px;line-height:28px;color:#bbbbbb;letter-spacing:1.135px;">4 spaces</span>
<div style="left:2834px;top:464px;width:464px;height:641px;border-radius:21px;box-shadow:0 30px 70px 10px rgba(0,0,0,0.55),0 0 6px rgba(0,0,0,0.5);background:#2a2627"></div>
<div id="calc" style="left:2834px;top:464px;width:464px;height:641px;border-radius:21px;overflow:hidden;background:#2a2627">
<div style="left:0;top:94px;width:464px;height:67px;background:#2f2627"></div>
<div style="left:15.5px;top:16.0px;width:25px;height:25px;border-radius:50%;background:#fe5f57"></div>
<div style="left:55.5px;top:16.0px;width:25px;height:25px;border-radius:50%;background:#febc2e"></div>
<div style="left:95.5px;top:16.0px;width:25px;height:25px;border-radius:50%;background:#28c840"></div>
<span style="left:298px;top:45px;width:140px;text-align:right;font-size:90px;line-height:120px;color:#ececec;font-family:DejaVu Sans Light,DejaVu Sans,sans-serif;font-weight:200;transform:scaleX(1.08);transform-origin:100% 50%">0</span>
<div style="left:0px;top:162px;width:112.3px;height:95px;background:#403a3b"></div>
<span style="left:0px;top:162px;width:112.3px;height:95px;line-height:95px;text-align:center;font-size:36px;color:#ececec;font-weight:400">AC</span>
<div style="left:114px;top:162px;width:114px;height:95px;background:#403a3b"></div>
<span style="left:114px;top:162px;width:114px;height:95px;line-height:95px;text-align:center;font-size:36px;color:#ececec"><span style="position:relative;top:-7px;font-size:26px">+</span>⁄<span style="position:relative;top:5px;font-size:30px">-</span></span>
<div style="left:229.7px;top:162px;width:114.8px;height:95px;background:#403a3b"></div>
<span style="left:229.7px;top:162px;width:114.8px;height:95px;line-height:95px;text-align:center;font-size:38px;color:#ececec;font-weight:400">%</span>
<div style="left:346px;top:162px;width:118px;height:95px;background:#ff9f0b"></div>
<span style="left:346px;top:167px;width:118px;height:95px;line-height:95px;text-align:center;font-size:52px;color:#ececec;font-weight:400">÷</span>
<div style="left:0px;top:258.5px;width:112.3px;height:94.5px;background:#5f5f5e"></div>
<span style="left:0px;top:258.5px;width:112.3px;height:94.5px;line-height:94.5px;text-align:center;font-size:42px;color:#ececec;font-weight:400">7</span>
<div style="left:114px;top:258.5px;width:114px;height:94.5px;background:#5f5f5e"></div>
<span style="left:114px;top:258.5px;width:114px;height:94.5px;line-height:94.5px;text-align:center;font-size:42px;color:#ececec;font-weight:400">8</span>
<div style="left:229.7px;top:258.5px;width:114.8px;height:94.5px;background:#5f5f5e"></div>
<span style="left:229.7px;top:258.5px;width:114.8px;height:94.5px;line-height:94.5px;text-align:center;font-size:42px;color:#ececec;font-weight:400">9</span>
<div style="left:346px;top:258.5px;width:118px;height:94.5px;background:#ff9f0b"></div>
<span style="left:346px;top:263.5px;width:118px;height:94.5px;line-height:94.5px;text-align:center;font-size:52px;color:#ececec;font-weight:400">×</span>
<div style="left:0px;top:354.5px;width:112.3px;height:94.5px;background:#5f5f5e"></div>
<span style="left:0px;top:354.5px;width:112.3px;height:94.5px;line-height:94.5px;text-align:center;font-size:42px;color:#ececec;font-weight:400">4</span>
<div style="left:114px;top:354.5px;width:114px;height:94.5px;background:#5f5f5e"></div>
<span style="left:114px;top:354.5px;width:114px;height:94.5px;line-height:94.5px;text-align:center;font-size:42px;color:#ececec;font-weight:400">5</span>
<div style="left:229.7px;top:354.5px;width:114.8px;height:94.5px;background:#5f5f5e"></div>
<span style="left:229.7px;top:354.5px;width:114.8px;height:94.5px;line-height:94.5px;text-align:center;font-size:42px;color:#ececec;font-weight:400">6</span>
<div style="left:346px;top:354.5px;width:118px;height:94.5px;background:#ff9f0b"></div>
<span style="left:346px;top:359.5px;width:118px;height:94.5px;line-height:94.5px;text-align:center;font-size:52px;color:#ececec;font-weight:400">−</span>
<div style="left:0px;top:450px;width:112.3px;height:94.5px;background:#5f5f5e"></div>
<span style="left:0px;top:450px;width:112.3px;height:94.5px;line-height:94.5px;text-align:center;font-size:42px;color:#ececec;font-weight:400">1</span>
<div style="left:114px;top:450px;width:114px;height:94.5px;background:#5f5f5e"></div>
<span style="left:114px;top:450px;width:114px;height:94.5px;line-height:94.5px;text-align:center;font-size:42px;color:#ececec;font-weight:400">2</span>
<div style="left:229.7px;top:450px;width:114.8px;height:94.5px;background:#5f5f5e"></div>
<span style="left:229.7px;top:450px;width:114.8px;height:94.5px;line-height:94.5px;text-align:center;font-size:42px;color:#ececec;font-weight:400">3</span>
<div style="left:346px;top:450px;width:118px;height:94.5px;background:#ff9f0b"></div>
<span style="left:346px;top:455px;width:118px;height:94.5px;line-height:94.5px;text-align:center;font-size:52px;color:#ececec;font-weight:400">+</span>
<div style="left:0px;top:546px;width:228px;height:95px;background:#5f5f5e"></div>
<span style="left:0px;top:546px;width:228px;height:95px;line-height:95px;text-align:center;font-size:42px;color:#ececec;font-weight:400">0</span>
<div style="left:229.7px;top:546px;width:114.8px;height:95px;background:#5f5f5e"></div>
<span style="left:229.7px;top:546px;width:114.8px;height:95px;line-height:95px;text-align:center;font-size:42px;color:#ececec;font-weight:400">.</span>
<div style="left:346px;top:546px;width:118px;height:95px;background:#ff9f0b"></div>
<span style="left:346px;top:551px;width:118px;height:95px;line-height:95px;text-align:center;font-size:52px;color:#ececec;font-weight:400">=</span>
</div>
<div style="left:2834px;top:464px;width:464px;height:641px;border-radius:21px;box-sizing:border-box;border:1.500px solid rgba(150,150,150,0.45)"></div>
<span id="wm0" style="left:1066px;top:2005.0px;font-size:84px;line-height:110px;color:transparent;font-family:'Liberation Serif',serif;letter-spacing:3.341px;-webkit-text-stroke:1px #adafb1;transform:scaleX(1.34);transform-origin:0 50%;">AaronLuo's</span>
<span id="wm1" style="left:1704px;top:2005.0px;font-size:84px;line-height:110px;color:transparent;font-family:'Liberation Serif',serif;letter-spacing:-3.712px;-webkit-text-stroke:1px #adafb1;transform:scaleX(1.34);transform-origin:0 50%;">Blog</span>
<span id="wm2" style="left:1981px;top:2005.0px;font-size:84px;line-height:110px;color:transparent;font-family:'Liberation Serif',serif;letter-spacing:8.505px;-webkit-text-stroke:1px #adafb1;transform:scaleX(1.34);transform-origin:0 50%;">from</span>
<span id="wm3" style="left:2306px;top:2005.0px;font-size:84px;line-height:110px;color:transparent;font-family:'Liberation Serif',serif;letter-spacing:5.884px;-webkit-text-stroke:1px #adafb1;transform:scaleX(1.34);transform-origin:0 50%;">byAaronluo.github.io</span>
<div style="left:0;top:0;width:3502px;height:2190px;box-sizing:border-box;border:2px solid #5f6264;border-top:2px solid #868889;border-radius:20px;pointer-events:none"></div>
<div style="left:0;top:0;width:20px;height:20px;background:radial-gradient(circle at 100% 100%, transparent 19.500px, #10284a 20.500px)"></div>
<div style="right:0;top:0;width:20px;height:20px;background:radial-gradient(circle at 0 100%, transparent 19.500px, #10284a 20.500px)"></div>
<div style="left:0;bottom:0;width:20px;height:20px;background:radial-gradient(circle at 100% 0, transparent 19.500px, #06090e 20.500px)"></div>
<div style="right:0;bottom:0;width:20px;height:20px;background:radial-gradient(circle at 0 0, transparent 19.500px, #06090e 20.500px)"></div>
</div>
</body></html>
